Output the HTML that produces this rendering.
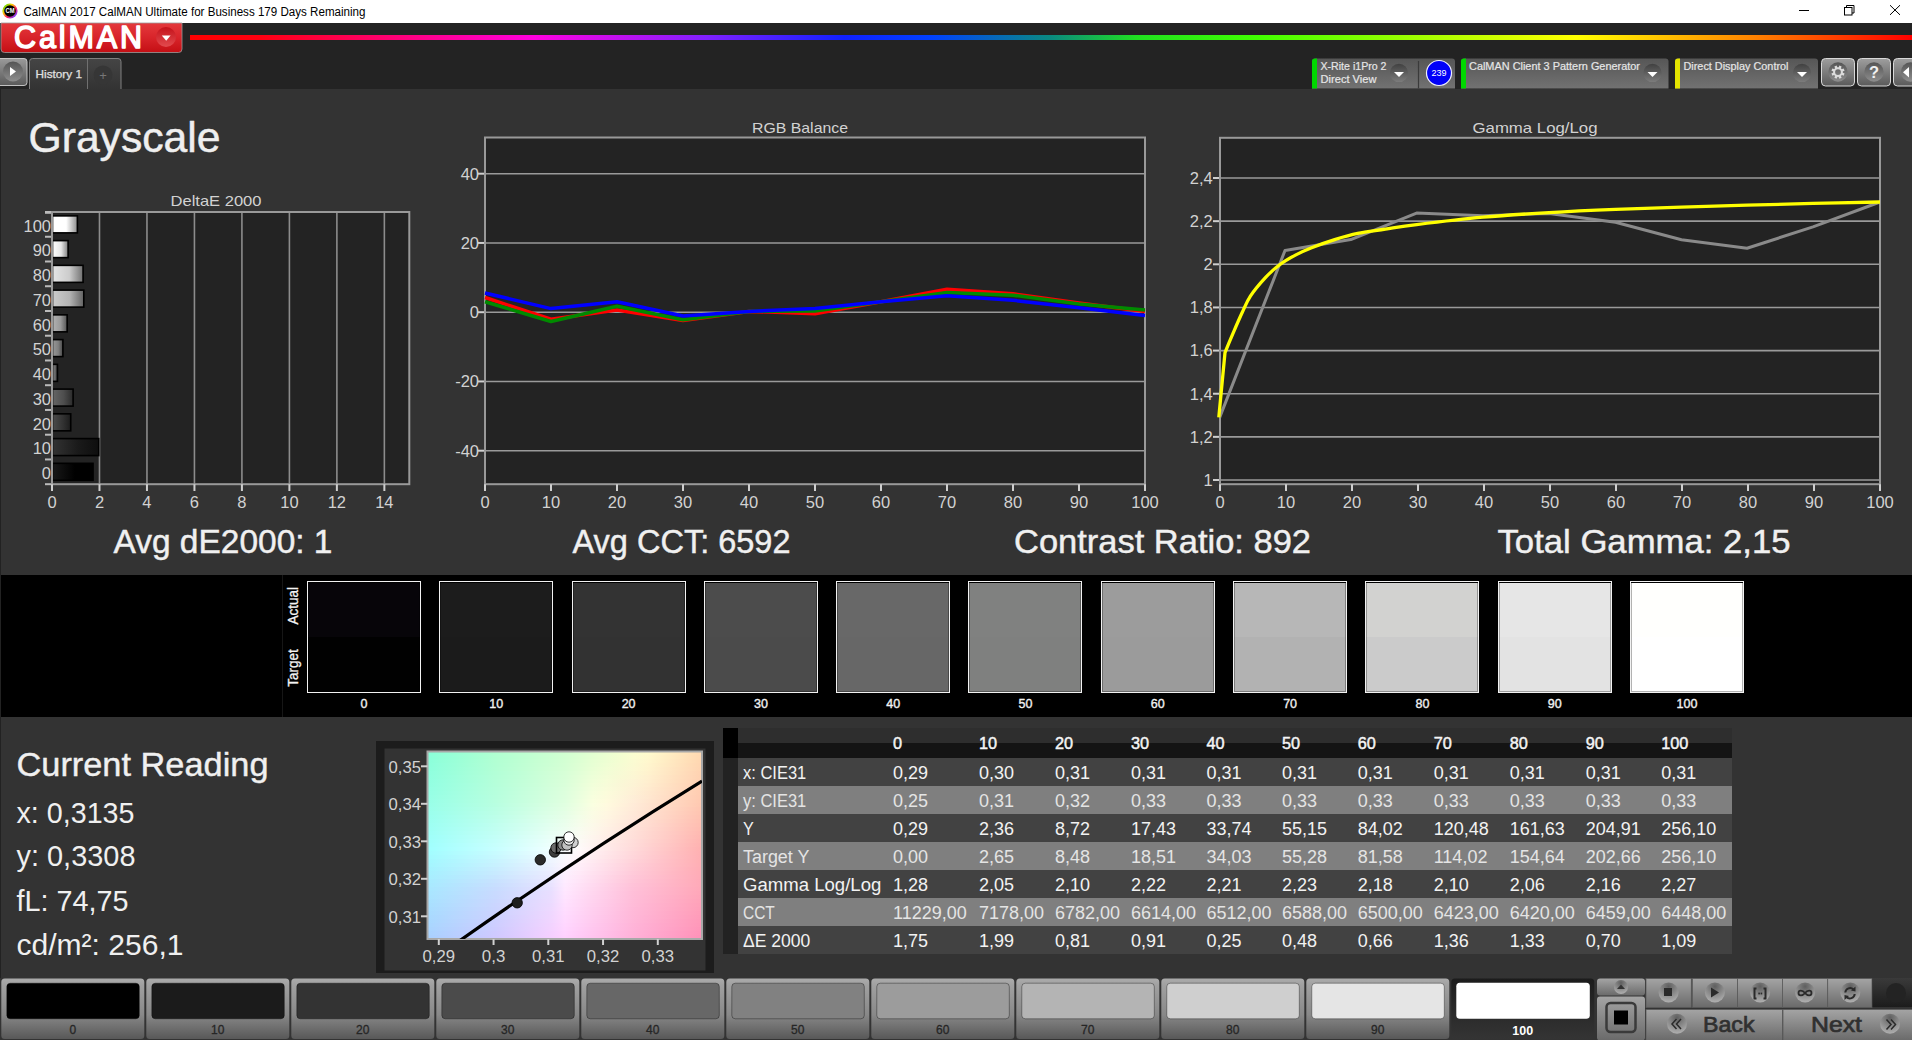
<!DOCTYPE html>
<html><head><meta charset="utf-8"><title>CalMAN Grayscale</title>
<style>
html,body{margin:0;padding:0;background:#333;overflow:hidden;}
svg{display:block;font-family:"Liberation Sans",sans-serif;}
</style></head><body>
<svg width="1912" height="1040" viewBox="0 0 1912 1040">
<defs>
<linearGradient id="ring" x1="0" y1="0" x2="1" y2="1">
<stop offset="0" stop-color="#00e000"/><stop offset="0.35" stop-color="#ffd000"/>
<stop offset="0.6" stop-color="#ff2060"/><stop offset="0.85" stop-color="#8040ff"/><stop offset="1" stop-color="#00d0ff"/></linearGradient>
<linearGradient id="redg" x1="0" y1="0" x2="0" y2="1">
<stop offset="0" stop-color="#e4393c"/><stop offset="0.5" stop-color="#d8242a"/><stop offset="1" stop-color="#c40f14"/></linearGradient>
<linearGradient id="reddd" x1="0" y1="0" x2="0" y2="1">
<stop offset="0" stop-color="#c4121a"/><stop offset="1" stop-color="#e24a4e"/></linearGradient>
<linearGradient id="rainbow" x1="190" y1="0" x2="1912" y2="0" gradientUnits="userSpaceOnUse">
<stop offset="0" stop-color="#ff0000"/>
<stop offset="0.04" stop-color="#ff0010"/>
<stop offset="0.20" stop-color="#ff00e0"/>
<stop offset="0.30" stop-color="#8020ff"/>
<stop offset="0.38" stop-color="#1020ff"/>
<stop offset="0.43" stop-color="#0040ff"/>
<stop offset="0.50" stop-color="#0a8a80"/>
<stop offset="0.55" stop-color="#20e020"/>
<stop offset="0.62" stop-color="#40ff00"/>
<stop offset="0.805" stop-color="#ffff00"/>
<stop offset="0.91" stop-color="#ff8000"/>
<stop offset="1" stop-color="#ff0000"/></linearGradient>
<linearGradient id="playg" x1="0" y1="0" x2="0" y2="1">
<stop offset="0" stop-color="#9a9a9a"/><stop offset="1" stop-color="#5a5a5a"/></linearGradient>
<radialGradient id="circd" cx="0.5" cy="0.3" r="0.75">
<stop offset="0" stop-color="#4a4a4a"/><stop offset="1" stop-color="#8a8a8a"/></radialGradient>
<linearGradient id="tabg" x1="0" y1="0" x2="0" y2="1">
<stop offset="0" stop-color="#454545"/><stop offset="1" stop-color="#333333"/></linearGradient>
<linearGradient id="panelg" x1="0" y1="0" x2="0" y2="1">
<stop offset="0" stop-color="#565656"/><stop offset="1" stop-color="#727272"/></linearGradient>
<linearGradient id="ddg" x1="0" y1="0" x2="0" y2="1">
<stop offset="0" stop-color="#404040"/><stop offset="1" stop-color="#7c7c7c"/></linearGradient>
<linearGradient id="btnc" x1="0" y1="0" x2="0" y2="1"><stop offset="0" stop-color="#555"/><stop offset="1" stop-color="#8e8e8e"/></linearGradient>
<linearGradient id="btng" x1="0" y1="0" x2="0" y2="1">
<stop offset="0" stop-color="#9e9e9e"/><stop offset="1" stop-color="#5a5a5a"/></linearGradient>
<linearGradient id="bar0" x1="0" y1="0" x2="1" y2="0">
<stop offset="0" stop-color="rgb(25,25,25)"/><stop offset="0.55" stop-color="rgb(0,0,0)"/><stop offset="1" stop-color="rgb(0,0,0)"/></linearGradient>
<linearGradient id="bar1" x1="0" y1="0" x2="1" y2="0">
<stop offset="0" stop-color="rgb(51,51,51)"/><stop offset="0.55" stop-color="rgb(26,26,26)"/><stop offset="1" stop-color="rgb(14,14,14)"/></linearGradient>
<linearGradient id="bar2" x1="0" y1="0" x2="1" y2="0">
<stop offset="0" stop-color="rgb(76,76,76)"/><stop offset="0.55" stop-color="rgb(51,51,51)"/><stop offset="1" stop-color="rgb(28,28,28)"/></linearGradient>
<linearGradient id="bar3" x1="0" y1="0" x2="1" y2="0">
<stop offset="0" stop-color="rgb(102,102,102)"/><stop offset="0.55" stop-color="rgb(77,77,77)"/><stop offset="1" stop-color="rgb(42,42,42)"/></linearGradient>
<linearGradient id="bar4" x1="0" y1="0" x2="1" y2="0">
<stop offset="0" stop-color="rgb(127,127,127)"/><stop offset="0.55" stop-color="rgb(102,102,102)"/><stop offset="1" stop-color="rgb(56,56,56)"/></linearGradient>
<linearGradient id="bar5" x1="0" y1="0" x2="1" y2="0">
<stop offset="0" stop-color="rgb(153,153,153)"/><stop offset="0.55" stop-color="rgb(128,128,128)"/><stop offset="1" stop-color="rgb(70,70,70)"/></linearGradient>
<linearGradient id="bar6" x1="0" y1="0" x2="1" y2="0">
<stop offset="0" stop-color="rgb(178,178,178)"/><stop offset="0.55" stop-color="rgb(153,153,153)"/><stop offset="1" stop-color="rgb(84,84,84)"/></linearGradient>
<linearGradient id="bar7" x1="0" y1="0" x2="1" y2="0">
<stop offset="0" stop-color="rgb(204,204,204)"/><stop offset="0.55" stop-color="rgb(179,179,179)"/><stop offset="1" stop-color="rgb(98,98,98)"/></linearGradient>
<linearGradient id="bar8" x1="0" y1="0" x2="1" y2="0">
<stop offset="0" stop-color="rgb(229,229,229)"/><stop offset="0.55" stop-color="rgb(204,204,204)"/><stop offset="1" stop-color="rgb(112,112,112)"/></linearGradient>
<linearGradient id="bar9" x1="0" y1="0" x2="1" y2="0">
<stop offset="0" stop-color="rgb(255,255,255)"/><stop offset="0.55" stop-color="rgb(230,230,230)"/><stop offset="1" stop-color="rgb(126,126,126)"/></linearGradient>
<linearGradient id="bar10" x1="0" y1="0" x2="1" y2="0">
<stop offset="0" stop-color="rgb(255,255,255)"/><stop offset="0.55" stop-color="rgb(255,255,255)"/><stop offset="1" stop-color="rgb(140,140,140)"/></linearGradient>
<linearGradient id="cs0"><stop offset="0.00" stop-color="#89ffd9"/><stop offset="0.05" stop-color="#91ffd7"/><stop offset="0.10" stop-color="#98ffd5"/><stop offset="0.15" stop-color="#a0ffd4"/><stop offset="0.20" stop-color="#a8ffd2"/><stop offset="0.25" stop-color="#b0ffd1"/><stop offset="0.30" stop-color="#b7ffd1"/><stop offset="0.35" stop-color="#bdffd1"/><stop offset="0.40" stop-color="#c4ffd1"/><stop offset="0.45" stop-color="#caffd1"/><stop offset="0.50" stop-color="#d1ffd1"/><stop offset="0.55" stop-color="#d9ffd1"/><stop offset="0.60" stop-color="#e2ffd1"/><stop offset="0.65" stop-color="#eaffd1"/><stop offset="0.70" stop-color="#f2ffd0"/><stop offset="0.75" stop-color="#fafed0"/><stop offset="0.80" stop-color="#fffbcd"/><stop offset="0.85" stop-color="#fff2c6"/><stop offset="0.90" stop-color="#ffe9bf"/><stop offset="0.95" stop-color="#ffe0b7"/><stop offset="1.00" stop-color="#ffd7b0"/></linearGradient>
<linearGradient id="cs1"><stop offset="0.00" stop-color="#8affda"/><stop offset="0.05" stop-color="#92ffd8"/><stop offset="0.10" stop-color="#99ffd7"/><stop offset="0.15" stop-color="#a1ffd5"/><stop offset="0.20" stop-color="#a9ffd3"/><stop offset="0.25" stop-color="#b1ffd2"/><stop offset="0.30" stop-color="#b7ffd2"/><stop offset="0.35" stop-color="#beffd2"/><stop offset="0.40" stop-color="#c5ffd2"/><stop offset="0.45" stop-color="#cbffd2"/><stop offset="0.50" stop-color="#d2ffd2"/><stop offset="0.55" stop-color="#dbffd2"/><stop offset="0.60" stop-color="#e4ffd2"/><stop offset="0.65" stop-color="#ecffd2"/><stop offset="0.70" stop-color="#f3fed1"/><stop offset="0.75" stop-color="#fbfdd1"/><stop offset="0.80" stop-color="#fff9cd"/><stop offset="0.85" stop-color="#fff0c6"/><stop offset="0.90" stop-color="#ffe8bf"/><stop offset="0.95" stop-color="#ffdfb7"/><stop offset="1.00" stop-color="#ffd6b0"/></linearGradient>
<linearGradient id="cs2"><stop offset="0.00" stop-color="#8bffdb"/><stop offset="0.05" stop-color="#93ffd9"/><stop offset="0.10" stop-color="#9affd8"/><stop offset="0.15" stop-color="#a2ffd6"/><stop offset="0.20" stop-color="#aaffd5"/><stop offset="0.25" stop-color="#b2ffd3"/><stop offset="0.30" stop-color="#b8ffd3"/><stop offset="0.35" stop-color="#bfffd3"/><stop offset="0.40" stop-color="#c6ffd3"/><stop offset="0.45" stop-color="#ccffd3"/><stop offset="0.50" stop-color="#d3ffd3"/><stop offset="0.55" stop-color="#dcffd3"/><stop offset="0.60" stop-color="#e6ffd3"/><stop offset="0.65" stop-color="#edfed3"/><stop offset="0.70" stop-color="#f4fdd2"/><stop offset="0.75" stop-color="#fbfbd2"/><stop offset="0.80" stop-color="#fff7ce"/><stop offset="0.85" stop-color="#ffefc6"/><stop offset="0.90" stop-color="#ffe6bf"/><stop offset="0.95" stop-color="#ffdeb7"/><stop offset="1.00" stop-color="#ffd5b0"/></linearGradient>
<linearGradient id="cs3"><stop offset="0.00" stop-color="#8cffdc"/><stop offset="0.05" stop-color="#94ffdb"/><stop offset="0.10" stop-color="#9bffd9"/><stop offset="0.15" stop-color="#a3ffd7"/><stop offset="0.20" stop-color="#abffd6"/><stop offset="0.25" stop-color="#b2ffd4"/><stop offset="0.30" stop-color="#b9ffd4"/><stop offset="0.35" stop-color="#c0ffd4"/><stop offset="0.40" stop-color="#c7ffd4"/><stop offset="0.45" stop-color="#cdffd4"/><stop offset="0.50" stop-color="#d4ffd4"/><stop offset="0.55" stop-color="#deffd4"/><stop offset="0.60" stop-color="#e7ffd4"/><stop offset="0.65" stop-color="#effed4"/><stop offset="0.70" stop-color="#f5fcd3"/><stop offset="0.75" stop-color="#fbfad2"/><stop offset="0.80" stop-color="#fff5ce"/><stop offset="0.85" stop-color="#ffedc6"/><stop offset="0.90" stop-color="#ffe5bf"/><stop offset="0.95" stop-color="#ffdcb7"/><stop offset="1.00" stop-color="#ffd4b0"/></linearGradient>
<linearGradient id="cs4"><stop offset="0.00" stop-color="#8dffdd"/><stop offset="0.05" stop-color="#95ffdc"/><stop offset="0.10" stop-color="#9cffda"/><stop offset="0.15" stop-color="#a4ffd9"/><stop offset="0.20" stop-color="#abffd7"/><stop offset="0.25" stop-color="#b3ffd5"/><stop offset="0.30" stop-color="#baffd5"/><stop offset="0.35" stop-color="#c1ffd5"/><stop offset="0.40" stop-color="#c8ffd5"/><stop offset="0.45" stop-color="#cfffd5"/><stop offset="0.50" stop-color="#d5ffd5"/><stop offset="0.55" stop-color="#dfffd5"/><stop offset="0.60" stop-color="#e9ffd5"/><stop offset="0.65" stop-color="#f1fed5"/><stop offset="0.70" stop-color="#f6fbd4"/><stop offset="0.75" stop-color="#fcf9d3"/><stop offset="0.80" stop-color="#fff4ce"/><stop offset="0.85" stop-color="#ffebc7"/><stop offset="0.90" stop-color="#ffe3bf"/><stop offset="0.95" stop-color="#ffdbb8"/><stop offset="1.00" stop-color="#ffd3b0"/></linearGradient>
<linearGradient id="cs5"><stop offset="0.00" stop-color="#8fffdf"/><stop offset="0.05" stop-color="#96ffdd"/><stop offset="0.10" stop-color="#9dffdb"/><stop offset="0.15" stop-color="#a5ffda"/><stop offset="0.20" stop-color="#acffd8"/><stop offset="0.25" stop-color="#b3ffd7"/><stop offset="0.30" stop-color="#baffd7"/><stop offset="0.35" stop-color="#c1ffd7"/><stop offset="0.40" stop-color="#c9ffd7"/><stop offset="0.45" stop-color="#d0ffd7"/><stop offset="0.50" stop-color="#d7ffd7"/><stop offset="0.55" stop-color="#e1ffd7"/><stop offset="0.60" stop-color="#ebffd7"/><stop offset="0.65" stop-color="#f2fdd6"/><stop offset="0.70" stop-color="#f7fad5"/><stop offset="0.75" stop-color="#fcf7d3"/><stop offset="0.80" stop-color="#fff2ce"/><stop offset="0.85" stop-color="#ffeac7"/><stop offset="0.90" stop-color="#ffe2bf"/><stop offset="0.95" stop-color="#ffd9b8"/><stop offset="1.00" stop-color="#ffd1b0"/></linearGradient>
<linearGradient id="cs6"><stop offset="0.00" stop-color="#90ffe0"/><stop offset="0.05" stop-color="#97ffde"/><stop offset="0.10" stop-color="#9effdd"/><stop offset="0.15" stop-color="#a6ffdb"/><stop offset="0.20" stop-color="#adffda"/><stop offset="0.25" stop-color="#b4ffd8"/><stop offset="0.30" stop-color="#bbffd8"/><stop offset="0.35" stop-color="#c2ffd8"/><stop offset="0.40" stop-color="#caffd8"/><stop offset="0.45" stop-color="#d1ffd8"/><stop offset="0.50" stop-color="#d8ffd8"/><stop offset="0.55" stop-color="#e3ffd8"/><stop offset="0.60" stop-color="#edffd8"/><stop offset="0.65" stop-color="#f4fdd7"/><stop offset="0.70" stop-color="#f8f9d5"/><stop offset="0.75" stop-color="#fcf6d4"/><stop offset="0.80" stop-color="#fff0cf"/><stop offset="0.85" stop-color="#ffe8c7"/><stop offset="0.90" stop-color="#ffe0bf"/><stop offset="0.95" stop-color="#ffd8b8"/><stop offset="1.00" stop-color="#ffd0b0"/></linearGradient>
<linearGradient id="cs7"><stop offset="0.00" stop-color="#91ffe1"/><stop offset="0.05" stop-color="#98ffe0"/><stop offset="0.10" stop-color="#9fffde"/><stop offset="0.15" stop-color="#a6ffdc"/><stop offset="0.20" stop-color="#adffdb"/><stop offset="0.25" stop-color="#b5ffd9"/><stop offset="0.30" stop-color="#bcffd9"/><stop offset="0.35" stop-color="#c3ffd9"/><stop offset="0.40" stop-color="#caffd9"/><stop offset="0.45" stop-color="#d2ffd9"/><stop offset="0.50" stop-color="#d9ffd9"/><stop offset="0.55" stop-color="#e4ffd9"/><stop offset="0.60" stop-color="#efffd9"/><stop offset="0.65" stop-color="#f6fdd8"/><stop offset="0.70" stop-color="#f9f8d6"/><stop offset="0.75" stop-color="#fdf4d5"/><stop offset="0.80" stop-color="#ffefcf"/><stop offset="0.85" stop-color="#ffe7c7"/><stop offset="0.90" stop-color="#ffdfbf"/><stop offset="0.95" stop-color="#ffd7b8"/><stop offset="1.00" stop-color="#ffcfb0"/></linearGradient>
<linearGradient id="cs8"><stop offset="0.00" stop-color="#92ffe2"/><stop offset="0.05" stop-color="#99ffe1"/><stop offset="0.10" stop-color="#a0ffdf"/><stop offset="0.15" stop-color="#a7ffde"/><stop offset="0.20" stop-color="#aeffdc"/><stop offset="0.25" stop-color="#b5ffda"/><stop offset="0.30" stop-color="#bdffda"/><stop offset="0.35" stop-color="#c4ffda"/><stop offset="0.40" stop-color="#cbffda"/><stop offset="0.45" stop-color="#d3ffda"/><stop offset="0.50" stop-color="#daffda"/><stop offset="0.55" stop-color="#e6ffda"/><stop offset="0.60" stop-color="#f1ffda"/><stop offset="0.65" stop-color="#f7fcd9"/><stop offset="0.70" stop-color="#faf7d7"/><stop offset="0.75" stop-color="#fdf3d5"/><stop offset="0.80" stop-color="#ffedcf"/><stop offset="0.85" stop-color="#ffe5c7"/><stop offset="0.90" stop-color="#ffddbf"/><stop offset="0.95" stop-color="#ffd5b8"/><stop offset="1.00" stop-color="#ffceb0"/></linearGradient>
<linearGradient id="cs9"><stop offset="0.00" stop-color="#94ffe4"/><stop offset="0.05" stop-color="#9affe2"/><stop offset="0.10" stop-color="#a1ffe0"/><stop offset="0.15" stop-color="#a8ffdf"/><stop offset="0.20" stop-color="#afffdd"/><stop offset="0.25" stop-color="#b6ffdc"/><stop offset="0.30" stop-color="#bdffdc"/><stop offset="0.35" stop-color="#c5ffdc"/><stop offset="0.40" stop-color="#ccffdc"/><stop offset="0.45" stop-color="#d4ffdc"/><stop offset="0.50" stop-color="#dcffdc"/><stop offset="0.55" stop-color="#e7ffdc"/><stop offset="0.60" stop-color="#f3ffdc"/><stop offset="0.65" stop-color="#f9fcda"/><stop offset="0.70" stop-color="#fbf7d8"/><stop offset="0.75" stop-color="#fef1d6"/><stop offset="0.80" stop-color="#ffebcf"/><stop offset="0.85" stop-color="#ffe3c7"/><stop offset="0.90" stop-color="#ffdcc0"/><stop offset="0.95" stop-color="#ffd4b8"/><stop offset="1.00" stop-color="#ffccb0"/></linearGradient>
<linearGradient id="cs10"><stop offset="0.00" stop-color="#95ffe5"/><stop offset="0.05" stop-color="#9bffe3"/><stop offset="0.10" stop-color="#a2ffe2"/><stop offset="0.15" stop-color="#a9ffe0"/><stop offset="0.20" stop-color="#b0ffde"/><stop offset="0.25" stop-color="#b6ffdd"/><stop offset="0.30" stop-color="#beffdd"/><stop offset="0.35" stop-color="#c6ffdd"/><stop offset="0.40" stop-color="#cdffdd"/><stop offset="0.45" stop-color="#d5ffdd"/><stop offset="0.50" stop-color="#ddffdd"/><stop offset="0.55" stop-color="#e9ffdd"/><stop offset="0.60" stop-color="#f5ffdd"/><stop offset="0.65" stop-color="#fbfcdb"/><stop offset="0.70" stop-color="#fcf6d9"/><stop offset="0.75" stop-color="#fef0d6"/><stop offset="0.80" stop-color="#ffe9cf"/><stop offset="0.85" stop-color="#ffe2c8"/><stop offset="0.90" stop-color="#ffdac0"/><stop offset="0.95" stop-color="#ffd3b8"/><stop offset="1.00" stop-color="#ffcbb0"/></linearGradient>
<linearGradient id="cs11"><stop offset="0.00" stop-color="#96ffe6"/><stop offset="0.05" stop-color="#9dffe4"/><stop offset="0.10" stop-color="#a3ffe3"/><stop offset="0.15" stop-color="#aaffe1"/><stop offset="0.20" stop-color="#b0ffe0"/><stop offset="0.25" stop-color="#b7ffde"/><stop offset="0.30" stop-color="#bfffde"/><stop offset="0.35" stop-color="#c7ffde"/><stop offset="0.40" stop-color="#ceffde"/><stop offset="0.45" stop-color="#d6ffde"/><stop offset="0.50" stop-color="#deffde"/><stop offset="0.55" stop-color="#eaffde"/><stop offset="0.60" stop-color="#f7ffde"/><stop offset="0.65" stop-color="#fcfbdc"/><stop offset="0.70" stop-color="#fdf5da"/><stop offset="0.75" stop-color="#feeed7"/><stop offset="0.80" stop-color="#ffe8d0"/><stop offset="0.85" stop-color="#ffe0c8"/><stop offset="0.90" stop-color="#ffd9c0"/><stop offset="0.95" stop-color="#ffd1b8"/><stop offset="1.00" stop-color="#ffcab0"/></linearGradient>
<linearGradient id="cs12"><stop offset="0.00" stop-color="#97ffe7"/><stop offset="0.05" stop-color="#9effe6"/><stop offset="0.10" stop-color="#a4ffe4"/><stop offset="0.15" stop-color="#abffe2"/><stop offset="0.20" stop-color="#b1ffe1"/><stop offset="0.25" stop-color="#b8ffdf"/><stop offset="0.30" stop-color="#c0ffdf"/><stop offset="0.35" stop-color="#c7ffdf"/><stop offset="0.40" stop-color="#cfffdf"/><stop offset="0.45" stop-color="#d7ffdf"/><stop offset="0.50" stop-color="#dfffdf"/><stop offset="0.55" stop-color="#ecffdf"/><stop offset="0.60" stop-color="#f9ffdf"/><stop offset="0.65" stop-color="#fefbdd"/><stop offset="0.70" stop-color="#fef4db"/><stop offset="0.75" stop-color="#ffedd8"/><stop offset="0.80" stop-color="#ffe6d0"/><stop offset="0.85" stop-color="#ffdfc8"/><stop offset="0.90" stop-color="#ffd7c0"/><stop offset="0.95" stop-color="#ffd0b8"/><stop offset="1.00" stop-color="#ffc9b0"/></linearGradient>
<linearGradient id="cs13"><stop offset="0.00" stop-color="#98ffe9"/><stop offset="0.05" stop-color="#9fffe7"/><stop offset="0.10" stop-color="#a5ffe6"/><stop offset="0.15" stop-color="#acffe4"/><stop offset="0.20" stop-color="#b2ffe2"/><stop offset="0.25" stop-color="#b8ffe1"/><stop offset="0.30" stop-color="#c1ffe1"/><stop offset="0.35" stop-color="#c9ffe1"/><stop offset="0.40" stop-color="#d1ffe1"/><stop offset="0.45" stop-color="#d9ffe1"/><stop offset="0.50" stop-color="#e1ffe1"/><stop offset="0.55" stop-color="#edffe1"/><stop offset="0.60" stop-color="#faffe1"/><stop offset="0.65" stop-color="#fffadf"/><stop offset="0.70" stop-color="#fff3db"/><stop offset="0.75" stop-color="#ffebd8"/><stop offset="0.80" stop-color="#ffe4d0"/><stop offset="0.85" stop-color="#ffddc8"/><stop offset="0.90" stop-color="#ffd6c0"/><stop offset="0.95" stop-color="#ffcfb8"/><stop offset="1.00" stop-color="#ffc7b0"/></linearGradient>
<linearGradient id="cs14"><stop offset="0.00" stop-color="#99ffeb"/><stop offset="0.05" stop-color="#a0ffe9"/><stop offset="0.10" stop-color="#a6ffe8"/><stop offset="0.15" stop-color="#adffe7"/><stop offset="0.20" stop-color="#b3ffe5"/><stop offset="0.25" stop-color="#baffe4"/><stop offset="0.30" stop-color="#c2ffe4"/><stop offset="0.35" stop-color="#caffe4"/><stop offset="0.40" stop-color="#d3ffe4"/><stop offset="0.45" stop-color="#dbffe4"/><stop offset="0.50" stop-color="#e3ffe3"/><stop offset="0.55" stop-color="#effee3"/><stop offset="0.60" stop-color="#fafde2"/><stop offset="0.65" stop-color="#fff9e0"/><stop offset="0.70" stop-color="#fff1dc"/><stop offset="0.75" stop-color="#ffead8"/><stop offset="0.80" stop-color="#ffe3d0"/><stop offset="0.85" stop-color="#ffdbc8"/><stop offset="0.90" stop-color="#ffd4c0"/><stop offset="0.95" stop-color="#ffccb8"/><stop offset="1.00" stop-color="#ffc5b0"/></linearGradient>
<linearGradient id="cs15"><stop offset="0.00" stop-color="#9affed"/><stop offset="0.05" stop-color="#a0ffec"/><stop offset="0.10" stop-color="#a7ffea"/><stop offset="0.15" stop-color="#aeffe9"/><stop offset="0.20" stop-color="#b5ffe8"/><stop offset="0.25" stop-color="#bbffe6"/><stop offset="0.30" stop-color="#c4ffe6"/><stop offset="0.35" stop-color="#ccffe6"/><stop offset="0.40" stop-color="#d5ffe6"/><stop offset="0.45" stop-color="#ddffe6"/><stop offset="0.50" stop-color="#e5fee6"/><stop offset="0.55" stop-color="#f1fee5"/><stop offset="0.60" stop-color="#fbfce4"/><stop offset="0.65" stop-color="#fff7e1"/><stop offset="0.70" stop-color="#fff0dd"/><stop offset="0.75" stop-color="#ffe8d8"/><stop offset="0.80" stop-color="#ffe1d0"/><stop offset="0.85" stop-color="#ffd9c8"/><stop offset="0.90" stop-color="#ffd2c0"/><stop offset="0.95" stop-color="#ffcab8"/><stop offset="1.00" stop-color="#ffc3b0"/></linearGradient>
<linearGradient id="cs16"><stop offset="0.00" stop-color="#9affef"/><stop offset="0.05" stop-color="#a1ffee"/><stop offset="0.10" stop-color="#a8ffed"/><stop offset="0.15" stop-color="#afffeb"/><stop offset="0.20" stop-color="#b6ffea"/><stop offset="0.25" stop-color="#bdffe9"/><stop offset="0.30" stop-color="#c5ffe9"/><stop offset="0.35" stop-color="#ceffe9"/><stop offset="0.40" stop-color="#d7ffe9"/><stop offset="0.45" stop-color="#dfffe9"/><stop offset="0.50" stop-color="#e7fee8"/><stop offset="0.55" stop-color="#f2fee8"/><stop offset="0.60" stop-color="#fbfbe5"/><stop offset="0.65" stop-color="#fff6e2"/><stop offset="0.70" stop-color="#ffeedd"/><stop offset="0.75" stop-color="#ffe7d9"/><stop offset="0.80" stop-color="#ffdfd0"/><stop offset="0.85" stop-color="#ffd8c8"/><stop offset="0.90" stop-color="#ffd0c0"/><stop offset="0.95" stop-color="#ffc8b8"/><stop offset="1.00" stop-color="#ffc1b0"/></linearGradient>
<linearGradient id="cs17"><stop offset="0.00" stop-color="#9bfff1"/><stop offset="0.05" stop-color="#a2fff0"/><stop offset="0.10" stop-color="#a9ffef"/><stop offset="0.15" stop-color="#b0ffee"/><stop offset="0.20" stop-color="#b7ffed"/><stop offset="0.25" stop-color="#beffec"/><stop offset="0.30" stop-color="#c7ffec"/><stop offset="0.35" stop-color="#d0ffec"/><stop offset="0.40" stop-color="#d8ffec"/><stop offset="0.45" stop-color="#e1ffec"/><stop offset="0.50" stop-color="#e9feeb"/><stop offset="0.55" stop-color="#f4fdea"/><stop offset="0.60" stop-color="#fcfae7"/><stop offset="0.65" stop-color="#fff4e3"/><stop offset="0.70" stop-color="#ffedde"/><stop offset="0.75" stop-color="#ffe5d9"/><stop offset="0.80" stop-color="#ffddd1"/><stop offset="0.85" stop-color="#ffd6c8"/><stop offset="0.90" stop-color="#ffcec0"/><stop offset="0.95" stop-color="#ffc6b8"/><stop offset="1.00" stop-color="#ffbfb0"/></linearGradient>
<linearGradient id="cs18"><stop offset="0.00" stop-color="#9cfff3"/><stop offset="0.05" stop-color="#a3fff2"/><stop offset="0.10" stop-color="#aafff1"/><stop offset="0.15" stop-color="#b1fff0"/><stop offset="0.20" stop-color="#b8fff0"/><stop offset="0.25" stop-color="#c0ffef"/><stop offset="0.30" stop-color="#c9ffef"/><stop offset="0.35" stop-color="#d1ffef"/><stop offset="0.40" stop-color="#daffef"/><stop offset="0.45" stop-color="#e3ffef"/><stop offset="0.50" stop-color="#ebfeed"/><stop offset="0.55" stop-color="#f5fdec"/><stop offset="0.60" stop-color="#fcf9e9"/><stop offset="0.65" stop-color="#fff3e4"/><stop offset="0.70" stop-color="#ffebde"/><stop offset="0.75" stop-color="#ffe3d9"/><stop offset="0.80" stop-color="#ffdcd1"/><stop offset="0.85" stop-color="#ffd4c9"/><stop offset="0.90" stop-color="#ffccc0"/><stop offset="0.95" stop-color="#ffc4b8"/><stop offset="1.00" stop-color="#ffbdb0"/></linearGradient>
<linearGradient id="cs19"><stop offset="0.00" stop-color="#9cfff5"/><stop offset="0.05" stop-color="#a4fff4"/><stop offset="0.10" stop-color="#abfff4"/><stop offset="0.15" stop-color="#b2fff3"/><stop offset="0.20" stop-color="#bafff2"/><stop offset="0.25" stop-color="#c1fff1"/><stop offset="0.30" stop-color="#cafff1"/><stop offset="0.35" stop-color="#d3fff1"/><stop offset="0.40" stop-color="#dcfff1"/><stop offset="0.45" stop-color="#e5fff1"/><stop offset="0.50" stop-color="#edfef0"/><stop offset="0.55" stop-color="#f7fcef"/><stop offset="0.60" stop-color="#fdf8ea"/><stop offset="0.65" stop-color="#fff1e5"/><stop offset="0.70" stop-color="#ffeadf"/><stop offset="0.75" stop-color="#ffe2d9"/><stop offset="0.80" stop-color="#ffdad1"/><stop offset="0.85" stop-color="#ffd2c9"/><stop offset="0.90" stop-color="#ffcac0"/><stop offset="0.95" stop-color="#ffc2b8"/><stop offset="1.00" stop-color="#ffbbb0"/></linearGradient>
<linearGradient id="cs20"><stop offset="0.00" stop-color="#9dfff7"/><stop offset="0.05" stop-color="#a5fff6"/><stop offset="0.10" stop-color="#acfff6"/><stop offset="0.15" stop-color="#b4fff5"/><stop offset="0.20" stop-color="#bbfff5"/><stop offset="0.25" stop-color="#c2fff4"/><stop offset="0.30" stop-color="#ccfff4"/><stop offset="0.35" stop-color="#d5fff4"/><stop offset="0.40" stop-color="#defff4"/><stop offset="0.45" stop-color="#e8fff4"/><stop offset="0.50" stop-color="#effdf3"/><stop offset="0.55" stop-color="#f9fcf1"/><stop offset="0.60" stop-color="#fdf7ec"/><stop offset="0.65" stop-color="#fff0e6"/><stop offset="0.70" stop-color="#ffe8e0"/><stop offset="0.75" stop-color="#ffe0d9"/><stop offset="0.80" stop-color="#ffd8d1"/><stop offset="0.85" stop-color="#ffd0c9"/><stop offset="0.90" stop-color="#ffc8c1"/><stop offset="0.95" stop-color="#ffc0b8"/><stop offset="1.00" stop-color="#ffb8b0"/></linearGradient>
<linearGradient id="cs21"><stop offset="0.00" stop-color="#9efff9"/><stop offset="0.05" stop-color="#a5fff9"/><stop offset="0.10" stop-color="#adfff8"/><stop offset="0.15" stop-color="#b5fff8"/><stop offset="0.20" stop-color="#bcfff7"/><stop offset="0.25" stop-color="#c4fff7"/><stop offset="0.30" stop-color="#cdfff7"/><stop offset="0.35" stop-color="#d7fff7"/><stop offset="0.40" stop-color="#e0fff7"/><stop offset="0.45" stop-color="#eafff7"/><stop offset="0.50" stop-color="#f1fdf5"/><stop offset="0.55" stop-color="#fafbf3"/><stop offset="0.60" stop-color="#fef5ed"/><stop offset="0.65" stop-color="#ffeee7"/><stop offset="0.70" stop-color="#ffe7e0"/><stop offset="0.75" stop-color="#ffdfd9"/><stop offset="0.80" stop-color="#ffd7d1"/><stop offset="0.85" stop-color="#ffcfc9"/><stop offset="0.90" stop-color="#ffc6c1"/><stop offset="0.95" stop-color="#ffbeb8"/><stop offset="1.00" stop-color="#ffb6b0"/></linearGradient>
<linearGradient id="cs22"><stop offset="0.00" stop-color="#9ffffb"/><stop offset="0.05" stop-color="#a6fffb"/><stop offset="0.10" stop-color="#aefffa"/><stop offset="0.15" stop-color="#b6fffa"/><stop offset="0.20" stop-color="#befffa"/><stop offset="0.25" stop-color="#c5fffa"/><stop offset="0.30" stop-color="#cffffa"/><stop offset="0.35" stop-color="#d9fffa"/><stop offset="0.40" stop-color="#e2fffa"/><stop offset="0.45" stop-color="#ecfffa"/><stop offset="0.50" stop-color="#f3fdf8"/><stop offset="0.55" stop-color="#fcfbf6"/><stop offset="0.60" stop-color="#fef4ef"/><stop offset="0.65" stop-color="#ffede8"/><stop offset="0.70" stop-color="#ffe5e1"/><stop offset="0.75" stop-color="#ffddda"/><stop offset="0.80" stop-color="#ffd5d1"/><stop offset="0.85" stop-color="#ffcdc9"/><stop offset="0.90" stop-color="#ffc5c1"/><stop offset="0.95" stop-color="#ffbcb8"/><stop offset="1.00" stop-color="#ffb4b0"/></linearGradient>
<linearGradient id="cs23"><stop offset="0.00" stop-color="#9ffffd"/><stop offset="0.05" stop-color="#a7fffd"/><stop offset="0.10" stop-color="#affffd"/><stop offset="0.15" stop-color="#b7fffd"/><stop offset="0.20" stop-color="#bffffd"/><stop offset="0.25" stop-color="#c7fffc"/><stop offset="0.30" stop-color="#d0fffc"/><stop offset="0.35" stop-color="#dafffc"/><stop offset="0.40" stop-color="#e4fffc"/><stop offset="0.45" stop-color="#eefffc"/><stop offset="0.50" stop-color="#f6fdfa"/><stop offset="0.55" stop-color="#fdfaf8"/><stop offset="0.60" stop-color="#fff3f0"/><stop offset="0.65" stop-color="#ffebe9"/><stop offset="0.70" stop-color="#ffe3e1"/><stop offset="0.75" stop-color="#ffdcda"/><stop offset="0.80" stop-color="#ffd3d1"/><stop offset="0.85" stop-color="#ffcbc9"/><stop offset="0.90" stop-color="#ffc3c1"/><stop offset="0.95" stop-color="#ffbab8"/><stop offset="1.00" stop-color="#ffb2b0"/></linearGradient>
<linearGradient id="cs24"><stop offset="0.00" stop-color="#a0ffff"/><stop offset="0.05" stop-color="#a8ffff"/><stop offset="0.10" stop-color="#b0ffff"/><stop offset="0.15" stop-color="#b8ffff"/><stop offset="0.20" stop-color="#c0ffff"/><stop offset="0.25" stop-color="#c8ffff"/><stop offset="0.30" stop-color="#d2ffff"/><stop offset="0.35" stop-color="#dcffff"/><stop offset="0.40" stop-color="#e6ffff"/><stop offset="0.45" stop-color="#f0ffff"/><stop offset="0.50" stop-color="#f8fcfd"/><stop offset="0.55" stop-color="#fffafa"/><stop offset="0.60" stop-color="#fff2f2"/><stop offset="0.65" stop-color="#ffeaea"/><stop offset="0.70" stop-color="#ffe2e2"/><stop offset="0.75" stop-color="#ffdada"/><stop offset="0.80" stop-color="#ffd1d2"/><stop offset="0.85" stop-color="#ffc9c9"/><stop offset="0.90" stop-color="#ffc1c1"/><stop offset="0.95" stop-color="#ffb8b8"/><stop offset="1.00" stop-color="#ffb0b0"/></linearGradient>
<linearGradient id="cs25"><stop offset="0.00" stop-color="#a1fdff"/><stop offset="0.05" stop-color="#a9fcff"/><stop offset="0.10" stop-color="#b1fcff"/><stop offset="0.15" stop-color="#b8fcff"/><stop offset="0.20" stop-color="#c0fbff"/><stop offset="0.25" stop-color="#c8fbff"/><stop offset="0.30" stop-color="#d2fbff"/><stop offset="0.35" stop-color="#dcfbff"/><stop offset="0.40" stop-color="#e5fcff"/><stop offset="0.45" stop-color="#effcff"/><stop offset="0.50" stop-color="#f8fafd"/><stop offset="0.55" stop-color="#fff7fa"/><stop offset="0.60" stop-color="#ffeff2"/><stop offset="0.65" stop-color="#ffe7ea"/><stop offset="0.70" stop-color="#ffdfe2"/><stop offset="0.75" stop-color="#ffd7da"/><stop offset="0.80" stop-color="#ffcfd2"/><stop offset="0.85" stop-color="#ffc7c9"/><stop offset="0.90" stop-color="#ffbfc1"/><stop offset="0.95" stop-color="#ffb7b9"/><stop offset="1.00" stop-color="#ffafb1"/></linearGradient>
<linearGradient id="cs26"><stop offset="0.00" stop-color="#a2faff"/><stop offset="0.05" stop-color="#a9faff"/><stop offset="0.10" stop-color="#b1f9ff"/><stop offset="0.15" stop-color="#b9f9ff"/><stop offset="0.20" stop-color="#c0f8ff"/><stop offset="0.25" stop-color="#c8f8ff"/><stop offset="0.30" stop-color="#d2f8ff"/><stop offset="0.35" stop-color="#dbf8ff"/><stop offset="0.40" stop-color="#e5f8ff"/><stop offset="0.45" stop-color="#eef9ff"/><stop offset="0.50" stop-color="#f9f8fd"/><stop offset="0.55" stop-color="#fff5f9"/><stop offset="0.60" stop-color="#ffedf1"/><stop offset="0.65" stop-color="#ffe5e9"/><stop offset="0.70" stop-color="#ffdde2"/><stop offset="0.75" stop-color="#ffd5da"/><stop offset="0.80" stop-color="#ffcdd2"/><stop offset="0.85" stop-color="#ffc5ca"/><stop offset="0.90" stop-color="#ffbec2"/><stop offset="0.95" stop-color="#ffb6ba"/><stop offset="1.00" stop-color="#ffaeb2"/></linearGradient>
<linearGradient id="cs27"><stop offset="0.00" stop-color="#a2f8ff"/><stop offset="0.05" stop-color="#aaf7ff"/><stop offset="0.10" stop-color="#b1f6ff"/><stop offset="0.15" stop-color="#b9f6ff"/><stop offset="0.20" stop-color="#c0f5ff"/><stop offset="0.25" stop-color="#c8f4ff"/><stop offset="0.30" stop-color="#d1f4ff"/><stop offset="0.35" stop-color="#dbf5ff"/><stop offset="0.40" stop-color="#e4f5ff"/><stop offset="0.45" stop-color="#eef5ff"/><stop offset="0.50" stop-color="#faf6fd"/><stop offset="0.55" stop-color="#fff2f9"/><stop offset="0.60" stop-color="#ffeaf1"/><stop offset="0.65" stop-color="#ffe2e9"/><stop offset="0.70" stop-color="#ffdae1"/><stop offset="0.75" stop-color="#ffd2d9"/><stop offset="0.80" stop-color="#ffcbd2"/><stop offset="0.85" stop-color="#ffc3ca"/><stop offset="0.90" stop-color="#ffbcc2"/><stop offset="0.95" stop-color="#ffb5ba"/><stop offset="1.00" stop-color="#ffaeb2"/></linearGradient>
<linearGradient id="cs28"><stop offset="0.00" stop-color="#a3f6ff"/><stop offset="0.05" stop-color="#abf5ff"/><stop offset="0.10" stop-color="#b2f4ff"/><stop offset="0.15" stop-color="#b9f3ff"/><stop offset="0.20" stop-color="#c1f2ff"/><stop offset="0.25" stop-color="#c8f1ff"/><stop offset="0.30" stop-color="#d1f1ff"/><stop offset="0.35" stop-color="#daf1ff"/><stop offset="0.40" stop-color="#e4f2ff"/><stop offset="0.45" stop-color="#edf2ff"/><stop offset="0.50" stop-color="#fbf4fe"/><stop offset="0.55" stop-color="#ffeff9"/><stop offset="0.60" stop-color="#ffe7f1"/><stop offset="0.65" stop-color="#ffdfe9"/><stop offset="0.70" stop-color="#ffd7e1"/><stop offset="0.75" stop-color="#ffcfd9"/><stop offset="0.80" stop-color="#ffc8d2"/><stop offset="0.85" stop-color="#ffc1ca"/><stop offset="0.90" stop-color="#ffbbc2"/><stop offset="0.95" stop-color="#ffb4bb"/><stop offset="1.00" stop-color="#ffadb3"/></linearGradient>
<linearGradient id="cs29"><stop offset="0.00" stop-color="#a4f3ff"/><stop offset="0.05" stop-color="#abf2ff"/><stop offset="0.10" stop-color="#b2f1ff"/><stop offset="0.15" stop-color="#baf0ff"/><stop offset="0.20" stop-color="#c1eeff"/><stop offset="0.25" stop-color="#c8edff"/><stop offset="0.30" stop-color="#d1eeff"/><stop offset="0.35" stop-color="#daeeff"/><stop offset="0.40" stop-color="#e3efff"/><stop offset="0.45" stop-color="#ecefff"/><stop offset="0.50" stop-color="#fbf2fe"/><stop offset="0.55" stop-color="#ffedf9"/><stop offset="0.60" stop-color="#ffe5f1"/><stop offset="0.65" stop-color="#ffdde9"/><stop offset="0.70" stop-color="#ffd5e1"/><stop offset="0.75" stop-color="#ffcdd9"/><stop offset="0.80" stop-color="#ffc6d2"/><stop offset="0.85" stop-color="#ffc0ca"/><stop offset="0.90" stop-color="#ffb9c3"/><stop offset="0.95" stop-color="#ffb2bb"/><stop offset="1.00" stop-color="#ffacb4"/></linearGradient>
<linearGradient id="cs30"><stop offset="0.00" stop-color="#a5f1ff"/><stop offset="0.05" stop-color="#acefff"/><stop offset="0.10" stop-color="#b3eeff"/><stop offset="0.15" stop-color="#baecff"/><stop offset="0.20" stop-color="#c1ebff"/><stop offset="0.25" stop-color="#c8eaff"/><stop offset="0.30" stop-color="#d1eaff"/><stop offset="0.35" stop-color="#daebff"/><stop offset="0.40" stop-color="#e2ebff"/><stop offset="0.45" stop-color="#ebecff"/><stop offset="0.50" stop-color="#fcf0fe"/><stop offset="0.55" stop-color="#ffeaf8"/><stop offset="0.60" stop-color="#ffe2f0"/><stop offset="0.65" stop-color="#ffdae9"/><stop offset="0.70" stop-color="#ffd2e1"/><stop offset="0.75" stop-color="#ffcad9"/><stop offset="0.80" stop-color="#ffc4d2"/><stop offset="0.85" stop-color="#ffbeca"/><stop offset="0.90" stop-color="#ffb7c3"/><stop offset="0.95" stop-color="#ffb1bc"/><stop offset="1.00" stop-color="#ffabb5"/></linearGradient>
<linearGradient id="cs31"><stop offset="0.00" stop-color="#a6efff"/><stop offset="0.05" stop-color="#adedff"/><stop offset="0.10" stop-color="#b3ebff"/><stop offset="0.15" stop-color="#bae9ff"/><stop offset="0.20" stop-color="#c1e8ff"/><stop offset="0.25" stop-color="#c8e6ff"/><stop offset="0.30" stop-color="#d1e7ff"/><stop offset="0.35" stop-color="#d9e7ff"/><stop offset="0.40" stop-color="#e2e8ff"/><stop offset="0.45" stop-color="#eae9ff"/><stop offset="0.50" stop-color="#fdeefe"/><stop offset="0.55" stop-color="#ffe7f8"/><stop offset="0.60" stop-color="#ffdff0"/><stop offset="0.65" stop-color="#ffd7e8"/><stop offset="0.70" stop-color="#ffcfe0"/><stop offset="0.75" stop-color="#ffc7d9"/><stop offset="0.80" stop-color="#ffc2d2"/><stop offset="0.85" stop-color="#ffbccb"/><stop offset="0.90" stop-color="#ffb6c4"/><stop offset="0.95" stop-color="#ffb0bd"/><stop offset="1.00" stop-color="#ffaab6"/></linearGradient>
<linearGradient id="cs32"><stop offset="0.00" stop-color="#a7ecff"/><stop offset="0.05" stop-color="#adeaff"/><stop offset="0.10" stop-color="#b4e8ff"/><stop offset="0.15" stop-color="#bbe6ff"/><stop offset="0.20" stop-color="#c1e4ff"/><stop offset="0.25" stop-color="#c8e2ff"/><stop offset="0.30" stop-color="#d0e3ff"/><stop offset="0.35" stop-color="#d9e4ff"/><stop offset="0.40" stop-color="#e1e5ff"/><stop offset="0.45" stop-color="#e9e6ff"/><stop offset="0.50" stop-color="#feecff"/><stop offset="0.55" stop-color="#ffe5f8"/><stop offset="0.60" stop-color="#ffddf0"/><stop offset="0.65" stop-color="#ffd5e8"/><stop offset="0.70" stop-color="#ffcde0"/><stop offset="0.75" stop-color="#ffc5d8"/><stop offset="0.80" stop-color="#ffbfd2"/><stop offset="0.85" stop-color="#ffbacb"/><stop offset="0.90" stop-color="#ffb4c4"/><stop offset="0.95" stop-color="#ffafbd"/><stop offset="1.00" stop-color="#ffa9b7"/></linearGradient>
<linearGradient id="cs33"><stop offset="0.00" stop-color="#a7eaff"/><stop offset="0.05" stop-color="#aee8ff"/><stop offset="0.10" stop-color="#b4e5ff"/><stop offset="0.15" stop-color="#bbe3ff"/><stop offset="0.20" stop-color="#c1e1ff"/><stop offset="0.25" stop-color="#c8dfff"/><stop offset="0.30" stop-color="#d0e0ff"/><stop offset="0.35" stop-color="#d8e1ff"/><stop offset="0.40" stop-color="#e0e2ff"/><stop offset="0.45" stop-color="#e9e3ff"/><stop offset="0.50" stop-color="#feeaff"/><stop offset="0.55" stop-color="#ffe2f7"/><stop offset="0.60" stop-color="#ffdaf0"/><stop offset="0.65" stop-color="#ffd2e8"/><stop offset="0.70" stop-color="#ffcae0"/><stop offset="0.75" stop-color="#ffc2d8"/><stop offset="0.80" stop-color="#ffbdd2"/><stop offset="0.85" stop-color="#ffb8cb"/><stop offset="0.90" stop-color="#ffb3c4"/><stop offset="0.95" stop-color="#ffaebe"/><stop offset="1.00" stop-color="#ffa9b7"/></linearGradient>
<linearGradient id="cs34"><stop offset="0.00" stop-color="#a8e8ff"/><stop offset="0.05" stop-color="#aee5ff"/><stop offset="0.10" stop-color="#b5e3ff"/><stop offset="0.15" stop-color="#bbe0ff"/><stop offset="0.20" stop-color="#c2deff"/><stop offset="0.25" stop-color="#c8dcff"/><stop offset="0.30" stop-color="#d0ddff"/><stop offset="0.35" stop-color="#d8deff"/><stop offset="0.40" stop-color="#e0dfff"/><stop offset="0.45" stop-color="#e8e0ff"/><stop offset="0.50" stop-color="#ffe8ff"/><stop offset="0.55" stop-color="#ffe0f7"/><stop offset="0.60" stop-color="#ffd8ef"/><stop offset="0.65" stop-color="#ffd0e8"/><stop offset="0.70" stop-color="#ffc8e0"/><stop offset="0.75" stop-color="#ffc0d8"/><stop offset="0.80" stop-color="#ffbbd2"/><stop offset="0.85" stop-color="#ffb6cb"/><stop offset="0.90" stop-color="#ffb1c5"/><stop offset="0.95" stop-color="#ffacbe"/><stop offset="1.00" stop-color="#ffa8b8"/></linearGradient>
<linearGradient id="cs35"><stop offset="0.00" stop-color="#a8e6ff"/><stop offset="0.05" stop-color="#afe3ff"/><stop offset="0.10" stop-color="#b5e1ff"/><stop offset="0.15" stop-color="#bcdfff"/><stop offset="0.20" stop-color="#c2dcff"/><stop offset="0.25" stop-color="#c9daff"/><stop offset="0.30" stop-color="#d1dbff"/><stop offset="0.35" stop-color="#d9dcff"/><stop offset="0.40" stop-color="#e1ddff"/><stop offset="0.45" stop-color="#e9deff"/><stop offset="0.50" stop-color="#ffe6ff"/><stop offset="0.55" stop-color="#ffdef7"/><stop offset="0.60" stop-color="#ffd6ef"/><stop offset="0.65" stop-color="#ffcee8"/><stop offset="0.70" stop-color="#ffc6e0"/><stop offset="0.75" stop-color="#ffbed8"/><stop offset="0.80" stop-color="#ffbad2"/><stop offset="0.85" stop-color="#ffb5cb"/><stop offset="0.90" stop-color="#ffb0c5"/><stop offset="0.95" stop-color="#ffabbe"/><stop offset="1.00" stop-color="#ffa6b8"/></linearGradient>
<linearGradient id="cs36"><stop offset="0.00" stop-color="#a8e4ff"/><stop offset="0.05" stop-color="#afe2ff"/><stop offset="0.10" stop-color="#b5dfff"/><stop offset="0.15" stop-color="#bcddff"/><stop offset="0.20" stop-color="#c3dbff"/><stop offset="0.25" stop-color="#c9d9ff"/><stop offset="0.30" stop-color="#d2daff"/><stop offset="0.35" stop-color="#dadbff"/><stop offset="0.40" stop-color="#e2dcff"/><stop offset="0.45" stop-color="#eaddff"/><stop offset="0.50" stop-color="#ffe4ff"/><stop offset="0.55" stop-color="#ffdcf7"/><stop offset="0.60" stop-color="#ffd4ef"/><stop offset="0.65" stop-color="#ffcde8"/><stop offset="0.70" stop-color="#ffc5e0"/><stop offset="0.75" stop-color="#ffbdd8"/><stop offset="0.80" stop-color="#ffb8d2"/><stop offset="0.85" stop-color="#ffb3cb"/><stop offset="0.90" stop-color="#ffaec5"/><stop offset="0.95" stop-color="#ffa9be"/><stop offset="1.00" stop-color="#ffa4b8"/></linearGradient>
<linearGradient id="cs37"><stop offset="0.00" stop-color="#a8e2ff"/><stop offset="0.05" stop-color="#afe0ff"/><stop offset="0.10" stop-color="#b6deff"/><stop offset="0.15" stop-color="#bcdbff"/><stop offset="0.20" stop-color="#c3d9ff"/><stop offset="0.25" stop-color="#cad7ff"/><stop offset="0.30" stop-color="#d2d8ff"/><stop offset="0.35" stop-color="#dbd9ff"/><stop offset="0.40" stop-color="#e3daff"/><stop offset="0.45" stop-color="#ebdcff"/><stop offset="0.50" stop-color="#ffe2ff"/><stop offset="0.55" stop-color="#ffdaf7"/><stop offset="0.60" stop-color="#ffd3ef"/><stop offset="0.65" stop-color="#ffcbe8"/><stop offset="0.70" stop-color="#ffc4e0"/><stop offset="0.75" stop-color="#ffbcd8"/><stop offset="0.80" stop-color="#ffb7d2"/><stop offset="0.85" stop-color="#ffb2cb"/><stop offset="0.90" stop-color="#ffacc5"/><stop offset="0.95" stop-color="#ffa7be"/><stop offset="1.00" stop-color="#ffa2b8"/></linearGradient>
<linearGradient id="cs38"><stop offset="0.00" stop-color="#a8e0ff"/><stop offset="0.05" stop-color="#afdeff"/><stop offset="0.10" stop-color="#b6dcff"/><stop offset="0.15" stop-color="#bddaff"/><stop offset="0.20" stop-color="#c4d8ff"/><stop offset="0.25" stop-color="#cbd5ff"/><stop offset="0.30" stop-color="#d3d7ff"/><stop offset="0.35" stop-color="#dcd8ff"/><stop offset="0.40" stop-color="#e4d9ff"/><stop offset="0.45" stop-color="#ecdaff"/><stop offset="0.50" stop-color="#ffe0ff"/><stop offset="0.55" stop-color="#ffd9f7"/><stop offset="0.60" stop-color="#ffd1ef"/><stop offset="0.65" stop-color="#ffcae8"/><stop offset="0.70" stop-color="#ffc2e0"/><stop offset="0.75" stop-color="#ffbbd8"/><stop offset="0.80" stop-color="#ffb5d2"/><stop offset="0.85" stop-color="#ffb0cb"/><stop offset="0.90" stop-color="#ffabc5"/><stop offset="0.95" stop-color="#ffa5be"/><stop offset="1.00" stop-color="#ffa0b8"/></linearGradient>
<linearGradient id="cs39"><stop offset="0.00" stop-color="#a8deff"/><stop offset="0.05" stop-color="#afdcff"/><stop offset="0.10" stop-color="#b6daff"/><stop offset="0.15" stop-color="#bdd8ff"/><stop offset="0.20" stop-color="#c4d6ff"/><stop offset="0.25" stop-color="#cbd4ff"/><stop offset="0.30" stop-color="#d4d5ff"/><stop offset="0.35" stop-color="#dcd6ff"/><stop offset="0.40" stop-color="#e5d8ff"/><stop offset="0.45" stop-color="#eed9ff"/><stop offset="0.50" stop-color="#ffdeff"/><stop offset="0.55" stop-color="#ffd7f7"/><stop offset="0.60" stop-color="#ffcfef"/><stop offset="0.65" stop-color="#ffc8e8"/><stop offset="0.70" stop-color="#ffc1e0"/><stop offset="0.75" stop-color="#ffb9d8"/><stop offset="0.80" stop-color="#ffb4d2"/><stop offset="0.85" stop-color="#ffafcb"/><stop offset="0.90" stop-color="#ffa9c5"/><stop offset="0.95" stop-color="#ffa4be"/><stop offset="1.00" stop-color="#ff9eb8"/></linearGradient>
<linearGradient id="cs40"><stop offset="0.00" stop-color="#a8dcff"/><stop offset="0.05" stop-color="#afdaff"/><stop offset="0.10" stop-color="#b6d8ff"/><stop offset="0.15" stop-color="#bed6ff"/><stop offset="0.20" stop-color="#c5d4ff"/><stop offset="0.25" stop-color="#ccd2ff"/><stop offset="0.30" stop-color="#d5d4ff"/><stop offset="0.35" stop-color="#ddd5ff"/><stop offset="0.40" stop-color="#e6d6ff"/><stop offset="0.45" stop-color="#efd7ff"/><stop offset="0.50" stop-color="#ffdcff"/><stop offset="0.55" stop-color="#ffd5f7"/><stop offset="0.60" stop-color="#ffceef"/><stop offset="0.65" stop-color="#ffc7e8"/><stop offset="0.70" stop-color="#ffbfe0"/><stop offset="0.75" stop-color="#ffb8d8"/><stop offset="0.80" stop-color="#ffb3d2"/><stop offset="0.85" stop-color="#ffadcb"/><stop offset="0.90" stop-color="#ffa7c5"/><stop offset="0.95" stop-color="#ffa2be"/><stop offset="1.00" stop-color="#ff9cb8"/></linearGradient>
<linearGradient id="cs41"><stop offset="0.00" stop-color="#a8daff"/><stop offset="0.05" stop-color="#afd8ff"/><stop offset="0.10" stop-color="#b7d7ff"/><stop offset="0.15" stop-color="#bed5ff"/><stop offset="0.20" stop-color="#c5d3ff"/><stop offset="0.25" stop-color="#cdd1ff"/><stop offset="0.30" stop-color="#d5d2ff"/><stop offset="0.35" stop-color="#ded3ff"/><stop offset="0.40" stop-color="#e7d5ff"/><stop offset="0.45" stop-color="#f0d6ff"/><stop offset="0.50" stop-color="#ffdaff"/><stop offset="0.55" stop-color="#ffd3f7"/><stop offset="0.60" stop-color="#ffccef"/><stop offset="0.65" stop-color="#ffc5e8"/><stop offset="0.70" stop-color="#ffbee0"/><stop offset="0.75" stop-color="#ffb7d8"/><stop offset="0.80" stop-color="#ffb1d2"/><stop offset="0.85" stop-color="#ffaccb"/><stop offset="0.90" stop-color="#ffa6c5"/><stop offset="0.95" stop-color="#ffa0be"/><stop offset="1.00" stop-color="#ff9ab8"/></linearGradient>
<linearGradient id="cs42"><stop offset="0.00" stop-color="#a8d9ff"/><stop offset="0.05" stop-color="#afd7ff"/><stop offset="0.10" stop-color="#b7d5ff"/><stop offset="0.15" stop-color="#bed3ff"/><stop offset="0.20" stop-color="#c6d1ff"/><stop offset="0.25" stop-color="#cdcfff"/><stop offset="0.30" stop-color="#d6d0ff"/><stop offset="0.35" stop-color="#dfd2ff"/><stop offset="0.40" stop-color="#e8d3ff"/><stop offset="0.45" stop-color="#f1d5ff"/><stop offset="0.50" stop-color="#ffd9ff"/><stop offset="0.55" stop-color="#ffd2f7"/><stop offset="0.60" stop-color="#ffcbef"/><stop offset="0.65" stop-color="#ffc4e8"/><stop offset="0.70" stop-color="#ffbde0"/><stop offset="0.75" stop-color="#ffb6d8"/><stop offset="0.80" stop-color="#ffb0d2"/><stop offset="0.85" stop-color="#ffaacb"/><stop offset="0.90" stop-color="#ffa4c5"/><stop offset="0.95" stop-color="#ff9ebe"/><stop offset="1.00" stop-color="#ff99b8"/></linearGradient>
<linearGradient id="cs43"><stop offset="0.00" stop-color="#a8d7ff"/><stop offset="0.05" stop-color="#b0d5ff"/><stop offset="0.10" stop-color="#b7d3ff"/><stop offset="0.15" stop-color="#bfd1ff"/><stop offset="0.20" stop-color="#c6cfff"/><stop offset="0.25" stop-color="#ceceff"/><stop offset="0.30" stop-color="#d7cfff"/><stop offset="0.35" stop-color="#e0d0ff"/><stop offset="0.40" stop-color="#e9d2ff"/><stop offset="0.45" stop-color="#f2d3ff"/><stop offset="0.50" stop-color="#ffd7ff"/><stop offset="0.55" stop-color="#ffd0f7"/><stop offset="0.60" stop-color="#ffc9ef"/><stop offset="0.65" stop-color="#ffc2e8"/><stop offset="0.70" stop-color="#ffbbe0"/><stop offset="0.75" stop-color="#ffb4d8"/><stop offset="0.80" stop-color="#ffaed2"/><stop offset="0.85" stop-color="#ffa8cb"/><stop offset="0.90" stop-color="#ffa3c5"/><stop offset="0.95" stop-color="#ff9dbe"/><stop offset="1.00" stop-color="#ff97b8"/></linearGradient>
<linearGradient id="cs44"><stop offset="0.00" stop-color="#a8d5ff"/><stop offset="0.05" stop-color="#b0d3ff"/><stop offset="0.10" stop-color="#b7d1ff"/><stop offset="0.15" stop-color="#bfcfff"/><stop offset="0.20" stop-color="#c7ceff"/><stop offset="0.25" stop-color="#ceccff"/><stop offset="0.30" stop-color="#d8cdff"/><stop offset="0.35" stop-color="#e1cfff"/><stop offset="0.40" stop-color="#ead0ff"/><stop offset="0.45" stop-color="#f3d2ff"/><stop offset="0.50" stop-color="#ffd5ff"/><stop offset="0.55" stop-color="#ffcef7"/><stop offset="0.60" stop-color="#ffc7ef"/><stop offset="0.65" stop-color="#ffc1e8"/><stop offset="0.70" stop-color="#ffbae0"/><stop offset="0.75" stop-color="#ffb3d8"/><stop offset="0.80" stop-color="#ffadd2"/><stop offset="0.85" stop-color="#ffa7cb"/><stop offset="0.90" stop-color="#ffa1c5"/><stop offset="0.95" stop-color="#ff9bbe"/><stop offset="1.00" stop-color="#ff95b8"/></linearGradient>
<linearGradient id="cs45"><stop offset="0.00" stop-color="#a8d3ff"/><stop offset="0.05" stop-color="#b0d1ff"/><stop offset="0.10" stop-color="#b8cfff"/><stop offset="0.15" stop-color="#bfceff"/><stop offset="0.20" stop-color="#c7ccff"/><stop offset="0.25" stop-color="#cfcaff"/><stop offset="0.30" stop-color="#d8ccff"/><stop offset="0.35" stop-color="#e2cdff"/><stop offset="0.40" stop-color="#ebcfff"/><stop offset="0.45" stop-color="#f4d0ff"/><stop offset="0.50" stop-color="#ffd3ff"/><stop offset="0.55" stop-color="#ffccf7"/><stop offset="0.60" stop-color="#ffc6ef"/><stop offset="0.65" stop-color="#ffbfe8"/><stop offset="0.70" stop-color="#ffb8e0"/><stop offset="0.75" stop-color="#ffb2d8"/><stop offset="0.80" stop-color="#ffacd2"/><stop offset="0.85" stop-color="#ffa5cb"/><stop offset="0.90" stop-color="#ff9fc5"/><stop offset="0.95" stop-color="#ff99be"/><stop offset="1.00" stop-color="#ff93b8"/></linearGradient>
<linearGradient id="cs46"><stop offset="0.00" stop-color="#a8d1ff"/><stop offset="0.05" stop-color="#b0cfff"/><stop offset="0.10" stop-color="#b8ceff"/><stop offset="0.15" stop-color="#c0ccff"/><stop offset="0.20" stop-color="#c8caff"/><stop offset="0.25" stop-color="#d0c9ff"/><stop offset="0.30" stop-color="#d9caff"/><stop offset="0.35" stop-color="#e2ccff"/><stop offset="0.40" stop-color="#ecceff"/><stop offset="0.45" stop-color="#f5cfff"/><stop offset="0.50" stop-color="#ffd1ff"/><stop offset="0.55" stop-color="#ffcaf7"/><stop offset="0.60" stop-color="#ffc4ef"/><stop offset="0.65" stop-color="#ffbee8"/><stop offset="0.70" stop-color="#ffb7e0"/><stop offset="0.75" stop-color="#ffb1d8"/><stop offset="0.80" stop-color="#ffaad2"/><stop offset="0.85" stop-color="#ffa4cb"/><stop offset="0.90" stop-color="#ff9ec5"/><stop offset="0.95" stop-color="#ff97be"/><stop offset="1.00" stop-color="#ff91b8"/></linearGradient>
<linearGradient id="selg" x1="0" y1="0" x2="0" y2="1"><stop offset="0" stop-color="#1c1c1c"/><stop offset="1" stop-color="#343434"/></linearGradient>
<linearGradient id="pbg" x1="0" y1="0" x2="0" y2="1">
<stop offset="0" stop-color="#ababab"/><stop offset="0.12" stop-color="#a0a0a0"/><stop offset="0.6" stop-color="#888888"/><stop offset="1" stop-color="#585858"/></linearGradient>
<linearGradient id="cbg" x1="0" y1="0" x2="0" y2="1">
<stop offset="0" stop-color="#a4a4a4"/><stop offset="1" stop-color="#6a6a6a"/></linearGradient>
<radialGradient id="cdd" cx="0.5" cy="0.2" r="0.8">
<stop offset="0" stop-color="#5e5e5e"/><stop offset="1" stop-color="#b0b0b0"/></radialGradient>
<linearGradient id="dkg" x1="0" y1="0" x2="0" y2="1"><stop offset="0" stop-color="#3a3a3a"/><stop offset="1" stop-color="#1c1c1c"/></linearGradient>
</defs>
<rect x="0" y="0" width="1912" height="23" fill="#ffffff" />
<rect x="0" y="23" width="1912" height="66" fill="#232323" />
<rect x="0" y="89" width="1912" height="486" fill="#333333" />
<rect x="0" y="575" width="1912" height="142" fill="#000000" />
<rect x="0" y="717" width="1912" height="323" fill="#333333" />
<rect x="0" y="89" width="1" height="889" fill="#222222" />
<circle cx="10" cy="11" r="7.6" fill="url(#ring)"/>
<circle cx="10" cy="11" r="5.8" fill="#000"/>
<text x="10" y="13.2" font-size="6.5" fill="#fff" text-anchor="middle" textLength="9" lengthAdjust="spacingAndGlyphs" font-weight="bold" >CM</text>
<text x="23.5" y="15.7" font-size="12.3" fill="#000" textLength="342" lengthAdjust="spacingAndGlyphs" >CalMAN 2017 CalMAN Ultimate for Business 179 Days Remaining</text>
<line x1="1799" y1="10.5" x2="1809" y2="10.5" stroke="#000" stroke-width="1" />
<rect x="1844.5" y="7.5" width="7.5" height="7.5" fill="none" stroke="#000" stroke-width="1"/>
<path d="M1846.5 7.5 V5.5 H1854 V13 H1852" fill="none" stroke="#000" stroke-width="1"/>
<path d="M1890 5.2 L1900 14.9 M1900 5.2 L1890 14.9" stroke="#000" stroke-width="1"/>
<path d="M1 23 H182 V49 Q182 52.5 178.5 52.5 H4.5 Q1 52.5 1 49 Z" fill="url(#redg)" stroke="#9a9a9a" stroke-width="0.8"/>
<text x="14" y="47.6" font-size="30.5" fill="#fff" stroke="#fff" stroke-width="1.5" stroke-linejoin="round" textLength="128" lengthAdjust="spacing">CalMAN</text>
<circle cx="166" cy="37" r="10" fill="url(#reddd)"/>
<path d="M161.8 35.5 H170.6 L166.2 40.8 Z" fill="#fff"/>
<rect x="190" y="35" width="1722" height="5" fill="url(#rainbow)" />
<path d="M-2 58.5 H24 Q27 58.5 27 61.5 V82.5 Q27 85.5 24 85.5 H-2 Z" fill="url(#playg)" stroke="#d0d0d0" stroke-width="0.9"/>
<circle cx="13" cy="71.5" r="10" fill="url(#btnc)"/>
<path d="M10 67 L16 71.5 L10 76 Z" fill="#fff"/>
<path d="M29.5 89 V61.5 Q29.5 58.5 32.5 58.5 H118 Q121 58.5 121 61.5 V89" fill="url(#tabg)" stroke="#808080" stroke-width="1"/>
<line x1="87.5" y1="59" x2="87.5" y2="89" stroke="#707070" stroke-width="1" />
<text x="35.5" y="77.8" font-size="11.3" fill="#e0e0e0" textLength="46.5" lengthAdjust="spacingAndGlyphs" stroke="#e0e0e0" stroke-width="0.25">History 1</text>
<circle cx="103" cy="75" r="9.5" fill="#363636"/>
<text x="103" y="79.5" font-size="13" fill="#777" text-anchor="middle" >+</text>
<path d="M1312 88.5 V61.5 Q1312 58.5 1315 58.5 H1452 Q1455 58.5 1455 61.5 V88.5 Z" fill="url(#panelg)"/>
<path d="M1312 88.5 V61.5 Q1312 58.5 1315 58.5 H1317 V88.5 Z" fill="#00d800"/>
<text x="1320.5" y="69.5" font-size="11.3" fill="#e6e6e6" textLength="66" lengthAdjust="spacingAndGlyphs" stroke="#e6e6e6" stroke-width="0.2">X-Rite i1Pro 2</text>
<text x="1320.5" y="83" font-size="11.3" fill="#e6e6e6" textLength="56" lengthAdjust="spacingAndGlyphs" stroke="#e6e6e6" stroke-width="0.2">Direct View</text>
<circle cx="1399" cy="72.9" r="9.2" fill="url(#ddg)"/>
<path d="M1394 72 H1404 L1399 77 Z" fill="#fff"/>
<line x1="1418.5" y1="61" x2="1418.5" y2="88.5" stroke="#3a3a3a" stroke-width="1.2" />
<circle cx="1439" cy="73" r="12.5" fill="#0000f8" stroke="#f0f0ff" stroke-width="1.2"/>
<text x="1439" y="76.3" font-size="9" fill="#fff" text-anchor="middle" textLength="15" lengthAdjust="spacingAndGlyphs" >239</text>
<path d="M1461 88.5 V61.5 Q1461 58.5 1464 58.5 H1665.5 Q1668.5 58.5 1668.5 61.5 V88.5 Z" fill="url(#panelg)"/>
<path d="M1461 88.5 V61.5 Q1461 58.5 1464 58.5 H1466 V88.5 Z" fill="#00d800"/>
<text x="1469" y="69.5" font-size="11.3" fill="#e6e6e6" textLength="171" lengthAdjust="spacingAndGlyphs" stroke="#e6e6e6" stroke-width="0.2">CalMAN Client 3 Pattern Generator</text>
<circle cx="1652.5" cy="72.9" r="9.2" fill="url(#ddg)"/>
<path d="M1647.5 72 H1657.5 L1652.5 77 Z" fill="#fff"/>
<path d="M1675 88.5 V61.5 Q1675 58.5 1678 58.5 H1815 Q1818 58.5 1818 61.5 V88.5 Z" fill="url(#panelg)"/>
<path d="M1675 88.5 V61.5 Q1675 58.5 1678 58.5 H1680 V88.5 Z" fill="#e4e400"/>
<text x="1683.5" y="69.5" font-size="11.3" fill="#e6e6e6" textLength="105" lengthAdjust="spacingAndGlyphs" stroke="#e6e6e6" stroke-width="0.2">Direct Display Control</text>
<circle cx="1802" cy="72.9" r="9.2" fill="url(#ddg)"/>
<path d="M1797 72 H1807 L1802 77 Z" fill="#fff"/>
<rect x="1821.5" y="58.5" width="33" height="27.5" rx="4" fill="url(#btng)" stroke="#d8d8d8" stroke-width="1"/>
<circle cx="1838" cy="72" r="9.7" fill="url(#btnc)"/>
<rect x="1857.5" y="58.5" width="33" height="27.5" rx="4" fill="url(#btng)" stroke="#d8d8d8" stroke-width="1"/>
<circle cx="1874" cy="72" r="9.7" fill="url(#btnc)"/>
<rect x="1893.5" y="58.5" width="30" height="27.5" rx="4" fill="url(#btng)" stroke="#d8d8d8" stroke-width="1"/>
<circle cx="1910.5" cy="72" r="9.7" fill="url(#btnc)"/>
<rect x="1836.8" y="65.5" width="2.4" height="3" fill="#dcdcdc" transform="rotate(22.5 1838 72.1)"/><rect x="1836.8" y="65.5" width="2.4" height="3" fill="#dcdcdc" transform="rotate(67.5 1838 72.1)"/><rect x="1836.8" y="65.5" width="2.4" height="3" fill="#dcdcdc" transform="rotate(112.5 1838 72.1)"/><rect x="1836.8" y="65.5" width="2.4" height="3" fill="#dcdcdc" transform="rotate(157.5 1838 72.1)"/><rect x="1836.8" y="65.5" width="2.4" height="3" fill="#dcdcdc" transform="rotate(202.5 1838 72.1)"/><rect x="1836.8" y="65.5" width="2.4" height="3" fill="#dcdcdc" transform="rotate(247.5 1838 72.1)"/><rect x="1836.8" y="65.5" width="2.4" height="3" fill="#dcdcdc" transform="rotate(292.5 1838 72.1)"/><rect x="1836.8" y="65.5" width="2.4" height="3" fill="#dcdcdc" transform="rotate(337.5 1838 72.1)"/>
<circle cx="1838" cy="72.1" r="3.9" fill="none" stroke="#dcdcdc" stroke-width="2"/>
<text x="1874" y="77.9" font-size="16.5" fill="#f0f0f0" text-anchor="middle" font-weight="bold" >?</text>
<path d="M1909 67 L1903 72.2 L1909 77.4 Z" fill="#fff"/>
<text x="28.5" y="152" font-size="42.5" fill="#efefef" textLength="192" lengthAdjust="spacingAndGlyphs" stroke="#efefef" stroke-width="0.5">Grayscale</text>
<rect x="52" y="212" width="357.3" height="272.2" fill="#232323" />
<line x1="99.47999999999999" y1="212" x2="99.47999999999999" y2="484.2" stroke="#8c8c8c" stroke-width="1.6" />
<line x1="146.95999999999998" y1="212" x2="146.95999999999998" y2="484.2" stroke="#8c8c8c" stroke-width="1.6" />
<line x1="194.44" y1="212" x2="194.44" y2="484.2" stroke="#8c8c8c" stroke-width="1.6" />
<line x1="241.92" y1="212" x2="241.92" y2="484.2" stroke="#8c8c8c" stroke-width="1.6" />
<line x1="289.4" y1="212" x2="289.4" y2="484.2" stroke="#8c8c8c" stroke-width="1.6" />
<line x1="336.88" y1="212" x2="336.88" y2="484.2" stroke="#8c8c8c" stroke-width="1.6" />
<line x1="384.35999999999996" y1="212" x2="384.35999999999996" y2="484.2" stroke="#8c8c8c" stroke-width="1.6" />
<text x="216" y="206.4" font-size="14.5" fill="#d2d2d2" text-anchor="middle" textLength="91" lengthAdjust="spacingAndGlyphs" >DeltaE 2000</text>
<line x1="45" y1="459.45454545454544" x2="52" y2="459.45454545454544" stroke="#bbbbbb" stroke-width="2" />
<text x="51" y="479.0272727272727" font-size="16.5" fill="#d2d2d2" text-anchor="end" >0</text>
<rect x="52.5" y="463.3272727272727" width="40.544999999999995" height="17" fill="url(#bar0)" stroke="#000" stroke-width="1.6"/>
<line x1="45" y1="434.7090909090909" x2="52" y2="434.7090909090909" stroke="#bbbbbb" stroke-width="2" />
<text x="51" y="454.28181818181815" font-size="16.5" fill="#d2d2d2" text-anchor="end" >10</text>
<rect x="52.5" y="438.58181818181816" width="46.242599999999996" height="17" fill="url(#bar1)" stroke="#000" stroke-width="1.6"/>
<line x1="45" y1="409.96363636363634" x2="52" y2="409.96363636363634" stroke="#bbbbbb" stroke-width="2" />
<text x="51" y="429.5363636363636" font-size="16.5" fill="#d2d2d2" text-anchor="end" >20</text>
<rect x="52.5" y="413.8363636363636" width="18.2294" height="17" fill="url(#bar2)" stroke="#000" stroke-width="1.6"/>
<line x1="45" y1="385.2181818181818" x2="52" y2="385.2181818181818" stroke="#bbbbbb" stroke-width="2" />
<text x="51" y="404.79090909090905" font-size="16.5" fill="#d2d2d2" text-anchor="end" >30</text>
<rect x="52.5" y="389.09090909090907" width="20.6034" height="17" fill="url(#bar3)" stroke="#000" stroke-width="1.6"/>
<line x1="45" y1="360.47272727272724" x2="52" y2="360.47272727272724" stroke="#bbbbbb" stroke-width="2" />
<text x="51" y="380.0454545454545" font-size="16.5" fill="#d2d2d2" text-anchor="end" >40</text>
<rect x="52.5" y="364.3454545454545" width="4.935" height="17" fill="url(#bar4)" stroke="#000" stroke-width="1.6"/>
<line x1="45" y1="335.72727272727275" x2="52" y2="335.72727272727275" stroke="#bbbbbb" stroke-width="2" />
<text x="51" y="355.3" font-size="16.5" fill="#d2d2d2" text-anchor="end" >50</text>
<rect x="52.5" y="339.6" width="10.395199999999999" height="17" fill="url(#bar5)" stroke="#000" stroke-width="1.6"/>
<line x1="45" y1="310.9818181818182" x2="52" y2="310.9818181818182" stroke="#bbbbbb" stroke-width="2" />
<text x="51" y="330.55454545454546" font-size="16.5" fill="#d2d2d2" text-anchor="end" >60</text>
<rect x="52.5" y="314.8545454545455" width="14.6684" height="17" fill="url(#bar6)" stroke="#000" stroke-width="1.6"/>
<line x1="45" y1="286.23636363636365" x2="52" y2="286.23636363636365" stroke="#bbbbbb" stroke-width="2" />
<text x="51" y="305.8090909090909" font-size="16.5" fill="#d2d2d2" text-anchor="end" >70</text>
<rect x="52.5" y="290.1090909090909" width="31.2864" height="17" fill="url(#bar7)" stroke="#000" stroke-width="1.6"/>
<line x1="45" y1="261.4909090909091" x2="52" y2="261.4909090909091" stroke="#bbbbbb" stroke-width="2" />
<text x="51" y="281.06363636363636" font-size="16.5" fill="#d2d2d2" text-anchor="end" >80</text>
<rect x="52.5" y="265.3636363636364" width="30.5742" height="17" fill="url(#bar8)" stroke="#000" stroke-width="1.6"/>
<line x1="45" y1="236.74545454545452" x2="52" y2="236.74545454545452" stroke="#bbbbbb" stroke-width="2" />
<text x="51" y="256.3181818181818" font-size="16.5" fill="#d2d2d2" text-anchor="end" >90</text>
<rect x="52.5" y="240.6181818181818" width="15.617999999999999" height="17" fill="url(#bar9)" stroke="#000" stroke-width="1.6"/>
<line x1="45" y1="212.0" x2="52" y2="212.0" stroke="#bbbbbb" stroke-width="2" />
<text x="51" y="231.57272727272726" font-size="16.5" fill="#d2d2d2" text-anchor="end" >100</text>
<rect x="52.5" y="215.87272727272727" width="24.8766" height="17" fill="url(#bar10)" stroke="#000" stroke-width="1.6"/>
<line x1="45" y1="212.8" x2="52" y2="212.8" stroke="#bbbbbb" stroke-width="2" />
<line x1="45" y1="484.2" x2="52" y2="484.2" stroke="#bbbbbb" stroke-width="2" />
<rect x="52" y="212" width="357.3" height="272.2" fill="none" stroke="#999" stroke-width="2"/>
<line x1="52.0" y1="484.2" x2="52.0" y2="491" stroke="#cfcfcf" stroke-width="2" />
<text x="52.0" y="508" font-size="16.5" fill="#d2d2d2" text-anchor="middle" >0</text>
<line x1="99.47999999999999" y1="484.2" x2="99.47999999999999" y2="491" stroke="#cfcfcf" stroke-width="2" />
<text x="99.47999999999999" y="508" font-size="16.5" fill="#d2d2d2" text-anchor="middle" >2</text>
<line x1="146.95999999999998" y1="484.2" x2="146.95999999999998" y2="491" stroke="#cfcfcf" stroke-width="2" />
<text x="146.95999999999998" y="508" font-size="16.5" fill="#d2d2d2" text-anchor="middle" >4</text>
<line x1="194.44" y1="484.2" x2="194.44" y2="491" stroke="#cfcfcf" stroke-width="2" />
<text x="194.44" y="508" font-size="16.5" fill="#d2d2d2" text-anchor="middle" >6</text>
<line x1="241.92" y1="484.2" x2="241.92" y2="491" stroke="#cfcfcf" stroke-width="2" />
<text x="241.92" y="508" font-size="16.5" fill="#d2d2d2" text-anchor="middle" >8</text>
<line x1="289.4" y1="484.2" x2="289.4" y2="491" stroke="#cfcfcf" stroke-width="2" />
<text x="289.4" y="508" font-size="16.5" fill="#d2d2d2" text-anchor="middle" >10</text>
<line x1="336.88" y1="484.2" x2="336.88" y2="491" stroke="#cfcfcf" stroke-width="2" />
<text x="336.88" y="508" font-size="16.5" fill="#d2d2d2" text-anchor="middle" >12</text>
<line x1="384.35999999999996" y1="484.2" x2="384.35999999999996" y2="491" stroke="#cfcfcf" stroke-width="2" />
<text x="384.35999999999996" y="508" font-size="16.5" fill="#d2d2d2" text-anchor="middle" >14</text>
<rect x="485" y="137.5" width="660" height="346.7" fill="#232323" />
<line x1="485" y1="173.7" x2="1145" y2="173.7" stroke="#9a9a9a" stroke-width="1.6" />
<line x1="478" y1="173.7" x2="485" y2="173.7" stroke="#cfcfcf" stroke-width="2" />
<text x="479" y="179.5" font-size="16.5" fill="#d2d2d2" text-anchor="end" >40</text>
<line x1="485" y1="242.95" x2="1145" y2="242.95" stroke="#9a9a9a" stroke-width="1.6" />
<line x1="478" y1="242.95" x2="485" y2="242.95" stroke="#cfcfcf" stroke-width="2" />
<text x="479" y="248.75" font-size="16.5" fill="#d2d2d2" text-anchor="end" >20</text>
<line x1="485" y1="312.2" x2="1145" y2="312.2" stroke="#9a9a9a" stroke-width="1.6" />
<line x1="478" y1="312.2" x2="485" y2="312.2" stroke="#cfcfcf" stroke-width="2" />
<text x="479" y="318.0" font-size="16.5" fill="#d2d2d2" text-anchor="end" >0</text>
<line x1="485" y1="381.45" x2="1145" y2="381.45" stroke="#9a9a9a" stroke-width="1.6" />
<line x1="478" y1="381.45" x2="485" y2="381.45" stroke="#cfcfcf" stroke-width="2" />
<text x="479" y="387.25" font-size="16.5" fill="#d2d2d2" text-anchor="end" >-20</text>
<line x1="485" y1="450.7" x2="1145" y2="450.7" stroke="#9a9a9a" stroke-width="1.6" />
<line x1="478" y1="450.7" x2="485" y2="450.7" stroke="#cfcfcf" stroke-width="2" />
<text x="479" y="456.5" font-size="16.5" fill="#d2d2d2" text-anchor="end" >-40</text>
<rect x="485" y="137.5" width="660" height="346.7" fill="none" stroke="#999" stroke-width="2"/>
<text x="800" y="133" font-size="14.5" fill="#d2d2d2" text-anchor="middle" textLength="96" lengthAdjust="spacingAndGlyphs" >RGB Balance</text>
<line x1="485" y1="484.2" x2="485" y2="491" stroke="#cfcfcf" stroke-width="2" />
<text x="485" y="508" font-size="16.5" fill="#d2d2d2" text-anchor="middle" >0</text>
<line x1="551" y1="484.2" x2="551" y2="491" stroke="#cfcfcf" stroke-width="2" />
<text x="551" y="508" font-size="16.5" fill="#d2d2d2" text-anchor="middle" >10</text>
<line x1="617" y1="484.2" x2="617" y2="491" stroke="#cfcfcf" stroke-width="2" />
<text x="617" y="508" font-size="16.5" fill="#d2d2d2" text-anchor="middle" >20</text>
<line x1="683" y1="484.2" x2="683" y2="491" stroke="#cfcfcf" stroke-width="2" />
<text x="683" y="508" font-size="16.5" fill="#d2d2d2" text-anchor="middle" >30</text>
<line x1="749" y1="484.2" x2="749" y2="491" stroke="#cfcfcf" stroke-width="2" />
<text x="749" y="508" font-size="16.5" fill="#d2d2d2" text-anchor="middle" >40</text>
<line x1="815" y1="484.2" x2="815" y2="491" stroke="#cfcfcf" stroke-width="2" />
<text x="815" y="508" font-size="16.5" fill="#d2d2d2" text-anchor="middle" >50</text>
<line x1="881" y1="484.2" x2="881" y2="491" stroke="#cfcfcf" stroke-width="2" />
<text x="881" y="508" font-size="16.5" fill="#d2d2d2" text-anchor="middle" >60</text>
<line x1="947" y1="484.2" x2="947" y2="491" stroke="#cfcfcf" stroke-width="2" />
<text x="947" y="508" font-size="16.5" fill="#d2d2d2" text-anchor="middle" >70</text>
<line x1="1013" y1="484.2" x2="1013" y2="491" stroke="#cfcfcf" stroke-width="2" />
<text x="1013" y="508" font-size="16.5" fill="#d2d2d2" text-anchor="middle" >80</text>
<line x1="1079" y1="484.2" x2="1079" y2="491" stroke="#cfcfcf" stroke-width="2" />
<text x="1079" y="508" font-size="16.5" fill="#d2d2d2" text-anchor="middle" >90</text>
<line x1="1145" y1="484.2" x2="1145" y2="491" stroke="#cfcfcf" stroke-width="2" />
<text x="1145" y="508" font-size="16.5" fill="#d2d2d2" text-anchor="middle" >100</text>
<polyline points="485,297.5 551,319.2 617,310 683,320.6 749,311.4 815,313.7 881,301.7 947,289.2 1013,293.8 1079,303 1145,311.4" fill="none" stroke="#ff0000" stroke-width="3.5" stroke-linejoin="round"/>
<polyline points="485,301.7 551,321.5 617,306.3 683,319.7 749,311.4 815,311 881,301.7 947,292.5 1013,295.2 1079,304 1145,310" fill="none" stroke="#008a00" stroke-width="3.5" stroke-linejoin="round"/>
<polyline points="485,293 551,308.6 617,301.7 683,316 749,311.4 815,308.6 881,301.7 947,295.7 1013,300.3 1079,307.7 1145,315.5" fill="none" stroke="#0000ff" stroke-width="3.5" stroke-linejoin="round"/>
<rect x="1220" y="137.8" width="660" height="346.4" fill="#232323" />
<line x1="1220" y1="480.0" x2="1880" y2="480.0" stroke="#9a9a9a" stroke-width="1.6" />
<line x1="1213" y1="480.0" x2="1220" y2="480.0" stroke="#cfcfcf" stroke-width="2" />
<text x="1212.8" y="485.8" font-size="16.5" fill="#d2d2d2" text-anchor="end" >1</text>
<line x1="1220" y1="436.86" x2="1880" y2="436.86" stroke="#9a9a9a" stroke-width="1.6" />
<line x1="1213" y1="436.86" x2="1220" y2="436.86" stroke="#cfcfcf" stroke-width="2" />
<text x="1212.8" y="442.66" font-size="16.5" fill="#d2d2d2" text-anchor="end" >1,2</text>
<line x1="1220" y1="393.72" x2="1880" y2="393.72" stroke="#9a9a9a" stroke-width="1.6" />
<line x1="1213" y1="393.72" x2="1220" y2="393.72" stroke="#cfcfcf" stroke-width="2" />
<text x="1212.8" y="399.52000000000004" font-size="16.5" fill="#d2d2d2" text-anchor="end" >1,4</text>
<line x1="1220" y1="350.58" x2="1880" y2="350.58" stroke="#9a9a9a" stroke-width="1.6" />
<line x1="1213" y1="350.58" x2="1220" y2="350.58" stroke="#cfcfcf" stroke-width="2" />
<text x="1212.8" y="356.38" font-size="16.5" fill="#d2d2d2" text-anchor="end" >1,6</text>
<line x1="1220" y1="307.44" x2="1880" y2="307.44" stroke="#9a9a9a" stroke-width="1.6" />
<line x1="1213" y1="307.44" x2="1220" y2="307.44" stroke="#cfcfcf" stroke-width="2" />
<text x="1212.8" y="313.24" font-size="16.5" fill="#d2d2d2" text-anchor="end" >1,8</text>
<line x1="1220" y1="264.3" x2="1880" y2="264.3" stroke="#9a9a9a" stroke-width="1.6" />
<line x1="1213" y1="264.3" x2="1220" y2="264.3" stroke="#cfcfcf" stroke-width="2" />
<text x="1212.8" y="270.1" font-size="16.5" fill="#d2d2d2" text-anchor="end" >2</text>
<line x1="1220" y1="221.15999999999997" x2="1880" y2="221.15999999999997" stroke="#9a9a9a" stroke-width="1.6" />
<line x1="1213" y1="221.15999999999997" x2="1220" y2="221.15999999999997" stroke="#cfcfcf" stroke-width="2" />
<text x="1212.8" y="226.95999999999998" font-size="16.5" fill="#d2d2d2" text-anchor="end" >2,2</text>
<line x1="1220" y1="178.02000000000004" x2="1880" y2="178.02000000000004" stroke="#9a9a9a" stroke-width="1.6" />
<line x1="1213" y1="178.02000000000004" x2="1220" y2="178.02000000000004" stroke="#cfcfcf" stroke-width="2" />
<text x="1212.8" y="183.82000000000005" font-size="16.5" fill="#d2d2d2" text-anchor="end" >2,4</text>
<rect x="1220" y="137.8" width="660" height="346.4" fill="none" stroke="#999" stroke-width="2"/>
<text x="1535" y="133" font-size="14.5" fill="#d2d2d2" text-anchor="middle" textLength="125" lengthAdjust="spacingAndGlyphs" >Gamma Log/Log</text>
<line x1="1220" y1="484.2" x2="1220" y2="491" stroke="#cfcfcf" stroke-width="2" />
<text x="1220" y="508" font-size="16.5" fill="#d2d2d2" text-anchor="middle" >0</text>
<line x1="1286" y1="484.2" x2="1286" y2="491" stroke="#cfcfcf" stroke-width="2" />
<text x="1286" y="508" font-size="16.5" fill="#d2d2d2" text-anchor="middle" >10</text>
<line x1="1352" y1="484.2" x2="1352" y2="491" stroke="#cfcfcf" stroke-width="2" />
<text x="1352" y="508" font-size="16.5" fill="#d2d2d2" text-anchor="middle" >20</text>
<line x1="1418" y1="484.2" x2="1418" y2="491" stroke="#cfcfcf" stroke-width="2" />
<text x="1418" y="508" font-size="16.5" fill="#d2d2d2" text-anchor="middle" >30</text>
<line x1="1484" y1="484.2" x2="1484" y2="491" stroke="#cfcfcf" stroke-width="2" />
<text x="1484" y="508" font-size="16.5" fill="#d2d2d2" text-anchor="middle" >40</text>
<line x1="1550" y1="484.2" x2="1550" y2="491" stroke="#cfcfcf" stroke-width="2" />
<text x="1550" y="508" font-size="16.5" fill="#d2d2d2" text-anchor="middle" >50</text>
<line x1="1616" y1="484.2" x2="1616" y2="491" stroke="#cfcfcf" stroke-width="2" />
<text x="1616" y="508" font-size="16.5" fill="#d2d2d2" text-anchor="middle" >60</text>
<line x1="1682" y1="484.2" x2="1682" y2="491" stroke="#cfcfcf" stroke-width="2" />
<text x="1682" y="508" font-size="16.5" fill="#d2d2d2" text-anchor="middle" >70</text>
<line x1="1748" y1="484.2" x2="1748" y2="491" stroke="#cfcfcf" stroke-width="2" />
<text x="1748" y="508" font-size="16.5" fill="#d2d2d2" text-anchor="middle" >80</text>
<line x1="1814" y1="484.2" x2="1814" y2="491" stroke="#cfcfcf" stroke-width="2" />
<text x="1814" y="508" font-size="16.5" fill="#d2d2d2" text-anchor="middle" >90</text>
<line x1="1880" y1="484.2" x2="1880" y2="491" stroke="#cfcfcf" stroke-width="2" />
<text x="1880" y="508" font-size="16.5" fill="#d2d2d2" text-anchor="middle" >100</text>
<polyline points="1219.7,417.4 1285,250.5 1350.8,239.6 1416.6,213.1 1483,215.8 1549,213.5 1615.5,222.3 1681.5,239.8 1747,248.2 1813,226.9 1878.6,202.5" fill="none" stroke="#8a8a8a" stroke-width="3" stroke-linejoin="round"/>
<path d="M1218.8,417.4 L1225,352.7 C1226.3,349.4 1230.2,339.8 1233.1,333.1 C1236.0,326.4 1239.4,318.5 1242.3,312.3 C1245.2,306.1 1246.6,302.0 1250.4,296.2 C1254.2,290.4 1260.6,282.9 1265.4,277.7 C1270.2,272.5 1274.3,268.8 1279.3,265 C1284.3,261.2 1290.0,258.0 1295.4,255.1 C1300.8,252.2 1305.0,250.3 1311.6,247.7 C1318.1,245.1 1327.0,242.0 1334.7,239.6 C1342.4,237.2 1349.2,235.1 1357.7,233.4 C1366.2,231.7 1375.6,230.7 1385.4,229.2 C1395.2,227.7 1400.3,226.6 1416.6,224.6 C1432.9,222.6 1460.9,219.2 1483,217.2 C1505.1,215.2 1526.9,213.9 1549,212.6 C1571.1,211.3 1593.4,210.3 1615.5,209.4 C1637.6,208.5 1659.6,207.8 1681.5,207.1 C1703.4,206.4 1725.1,205.8 1747,205.2 C1768.9,204.6 1790.8,203.9 1813,203.4 C1835.2,202.9 1868.8,202.2 1880,202" fill="none" stroke="#ffff00" stroke-width="3.3" stroke-linejoin="round"/>
<text x="113.5" y="553" font-size="33.3" fill="#f0f0f0" textLength="219" lengthAdjust="spacingAndGlyphs" stroke="#f0f0f0" stroke-width="0.45">Avg dE2000: 1</text>
<text x="572.5" y="553" font-size="33.3" fill="#f0f0f0" textLength="218" lengthAdjust="spacingAndGlyphs" stroke="#f0f0f0" stroke-width="0.45">Avg CCT: 6592</text>
<text x="1014" y="553" font-size="33.3" fill="#f0f0f0" textLength="297" lengthAdjust="spacingAndGlyphs" stroke="#f0f0f0" stroke-width="0.45">Contrast Ratio: 892</text>
<text x="1497.5" y="553" font-size="33.3" fill="#f0f0f0" textLength="293" lengthAdjust="spacingAndGlyphs" stroke="#f0f0f0" stroke-width="0.45">Total Gamma: 2,15</text>
<line x1="282.5" y1="575" x2="282.5" y2="717" stroke="#161616" stroke-width="1" />
<text transform="translate(297.8 605.8) rotate(-90)" font-size="14.5" fill="#f4f4f4" stroke="#f4f4f4" stroke-width="0.3" text-anchor="middle" textLength="37.5" lengthAdjust="spacingAndGlyphs">Actual</text>
<text transform="translate(297.8 668) rotate(-90)" font-size="14.5" fill="#f4f4f4" stroke="#f4f4f4" stroke-width="0.3" text-anchor="middle" textLength="37.5" lengthAdjust="spacingAndGlyphs">Target</text>
<rect x="308" y="583" width="112" height="54" fill="#070509" />
<rect x="308" y="637" width="112" height="55" fill="#010101" />
<rect x="307.5" y="581.5" width="113" height="111" fill="none" stroke="#f2f2f2" stroke-width="1"/>
<rect x="308.5" y="582.5" width="111" height="109" fill="none" stroke="rgba(0,0,0,0.3)" stroke-width="1"/>
<text x="364.0" y="708" font-size="12.5" fill="#f2f2f2" text-anchor="middle" stroke="#f2f2f2" stroke-width="0.35">0</text>
<rect x="440" y="583" width="112" height="54" fill="#1c1c1c" />
<rect x="440" y="637" width="112" height="55" fill="#1b1b1b" />
<rect x="439.5" y="581.5" width="113" height="111" fill="none" stroke="#f2f2f2" stroke-width="1"/>
<rect x="440.5" y="582.5" width="111" height="109" fill="none" stroke="rgba(0,0,0,0.3)" stroke-width="1"/>
<text x="496.3" y="708" font-size="12.5" fill="#f2f2f2" text-anchor="middle" stroke="#f2f2f2" stroke-width="0.35">10</text>
<rect x="573" y="583" width="112" height="54" fill="#333333" />
<rect x="573" y="637" width="112" height="55" fill="#323232" />
<rect x="572.5" y="581.5" width="113" height="111" fill="none" stroke="#f2f2f2" stroke-width="1"/>
<rect x="573.5" y="582.5" width="111" height="109" fill="none" stroke="rgba(0,0,0,0.3)" stroke-width="1"/>
<text x="628.6" y="708" font-size="12.5" fill="#f2f2f2" text-anchor="middle" stroke="#f2f2f2" stroke-width="0.35">20</text>
<rect x="705" y="583" width="112" height="54" fill="#4c4c4c" />
<rect x="705" y="637" width="112" height="55" fill="#4b4b4b" />
<rect x="704.5" y="581.5" width="113" height="111" fill="none" stroke="#f2f2f2" stroke-width="1"/>
<rect x="705.5" y="582.5" width="111" height="109" fill="none" stroke="rgba(0,0,0,0.3)" stroke-width="1"/>
<text x="760.9000000000001" y="708" font-size="12.5" fill="#f2f2f2" text-anchor="middle" stroke="#f2f2f2" stroke-width="0.35">30</text>
<rect x="837" y="583" width="112" height="54" fill="#686868" />
<rect x="837" y="637" width="112" height="55" fill="#676767" />
<rect x="836.5" y="581.5" width="113" height="111" fill="none" stroke="#f2f2f2" stroke-width="1"/>
<rect x="837.5" y="582.5" width="111" height="109" fill="none" stroke="rgba(0,0,0,0.3)" stroke-width="1"/>
<text x="893.2" y="708" font-size="12.5" fill="#f2f2f2" text-anchor="middle" stroke="#f2f2f2" stroke-width="0.35">40</text>
<rect x="969" y="583" width="112" height="54" fill="#808180" />
<rect x="969" y="637" width="112" height="55" fill="#7f807f" />
<rect x="968.5" y="581.5" width="113" height="111" fill="none" stroke="#f2f2f2" stroke-width="1"/>
<rect x="969.5" y="582.5" width="111" height="109" fill="none" stroke="rgba(0,0,0,0.3)" stroke-width="1"/>
<text x="1025.5" y="708" font-size="12.5" fill="#f2f2f2" text-anchor="middle" stroke="#f2f2f2" stroke-width="0.35">50</text>
<rect x="1102" y="583" width="112" height="54" fill="#9c9c9c" />
<rect x="1102" y="637" width="112" height="55" fill="#9b9b9b" />
<rect x="1101.5" y="581.5" width="113" height="111" fill="none" stroke="#f2f2f2" stroke-width="1"/>
<rect x="1102.5" y="582.5" width="111" height="109" fill="none" stroke="rgba(0,0,0,0.3)" stroke-width="1"/>
<text x="1157.8000000000002" y="708" font-size="12.5" fill="#f2f2f2" text-anchor="middle" stroke="#f2f2f2" stroke-width="0.35">60</text>
<rect x="1234" y="583" width="112" height="54" fill="#b7b7b7" />
<rect x="1234" y="637" width="112" height="55" fill="#b2b2b2" />
<rect x="1233.5" y="581.5" width="113" height="111" fill="none" stroke="#f2f2f2" stroke-width="1"/>
<rect x="1234.5" y="582.5" width="111" height="109" fill="none" stroke="rgba(0,0,0,0.3)" stroke-width="1"/>
<text x="1290.1000000000001" y="708" font-size="12.5" fill="#f2f2f2" text-anchor="middle" stroke="#f2f2f2" stroke-width="0.35">70</text>
<rect x="1366" y="583" width="112" height="54" fill="#d2d2d0" />
<rect x="1366" y="637" width="112" height="55" fill="#cbcbcb" />
<rect x="1365.5" y="581.5" width="113" height="111" fill="none" stroke="#f2f2f2" stroke-width="1"/>
<rect x="1366.5" y="582.5" width="111" height="109" fill="none" stroke="rgba(0,0,0,0.3)" stroke-width="1"/>
<text x="1422.4" y="708" font-size="12.5" fill="#f2f2f2" text-anchor="middle" stroke="#f2f2f2" stroke-width="0.35">80</text>
<rect x="1499" y="583" width="112" height="54" fill="#e6e6e6" />
<rect x="1499" y="637" width="112" height="55" fill="#e3e3e3" />
<rect x="1498.5" y="581.5" width="113" height="111" fill="none" stroke="#f2f2f2" stroke-width="1"/>
<rect x="1499.5" y="582.5" width="111" height="109" fill="none" stroke="rgba(0,0,0,0.3)" stroke-width="1"/>
<text x="1554.7" y="708" font-size="12.5" fill="#f2f2f2" text-anchor="middle" stroke="#f2f2f2" stroke-width="0.35">90</text>
<rect x="1631" y="583" width="112" height="54" fill="#fffffd" />
<rect x="1631" y="637" width="112" height="55" fill="#ffffff" />
<rect x="1630.5" y="581.5" width="113" height="111" fill="none" stroke="#f2f2f2" stroke-width="1"/>
<rect x="1631.5" y="582.5" width="111" height="109" fill="none" stroke="rgba(0,0,0,0.3)" stroke-width="1"/>
<text x="1687.0" y="708" font-size="12.5" fill="#f2f2f2" text-anchor="middle" stroke="#f2f2f2" stroke-width="0.35">100</text>
<text x="16.5" y="775.6" font-size="34" fill="#f0f0f0" textLength="252" lengthAdjust="spacingAndGlyphs" stroke="#f0f0f0" stroke-width="0.4">Current Reading</text>
<text x="16.5" y="822.8" font-size="30" fill="#f0f0f0" textLength="118" lengthAdjust="spacingAndGlyphs" >x: 0,3135</text>
<text x="16.5" y="866.2" font-size="30" fill="#f0f0f0" textLength="119" lengthAdjust="spacingAndGlyphs" >y: 0,3308</text>
<text x="16.5" y="911.3" font-size="30" fill="#f0f0f0" textLength="112" lengthAdjust="spacingAndGlyphs" >fL: 74,75</text>
<text x="16.5" y="955.4" font-size="30" fill="#f0f0f0" textLength="167" lengthAdjust="spacingAndGlyphs" >cd/m²: 256,1</text>
<rect x="376" y="741" width="338" height="232" fill="#1c1c1c" />
<rect x="384.5" y="748.5" width="321" height="222" fill="#333333" />
<rect x="427" y="751" width="276" height="4" fill="url(#cs0)" />
<rect x="427" y="755" width="276" height="4" fill="url(#cs1)" />
<rect x="427" y="759" width="276" height="4" fill="url(#cs2)" />
<rect x="427" y="763" width="276" height="4" fill="url(#cs3)" />
<rect x="427" y="767" width="276" height="4" fill="url(#cs4)" />
<rect x="427" y="771" width="276" height="4" fill="url(#cs5)" />
<rect x="427" y="775" width="276" height="4" fill="url(#cs6)" />
<rect x="427" y="779" width="276" height="4" fill="url(#cs7)" />
<rect x="427" y="783" width="276" height="4" fill="url(#cs8)" />
<rect x="427" y="787" width="276" height="4" fill="url(#cs9)" />
<rect x="427" y="791" width="276" height="4" fill="url(#cs10)" />
<rect x="427" y="795" width="276" height="4" fill="url(#cs11)" />
<rect x="427" y="799" width="276" height="4" fill="url(#cs12)" />
<rect x="427" y="803" width="276" height="4" fill="url(#cs13)" />
<rect x="427" y="807" width="276" height="4" fill="url(#cs14)" />
<rect x="427" y="811" width="276" height="4" fill="url(#cs15)" />
<rect x="427" y="815" width="276" height="4" fill="url(#cs16)" />
<rect x="427" y="819" width="276" height="4" fill="url(#cs17)" />
<rect x="427" y="823" width="276" height="4" fill="url(#cs18)" />
<rect x="427" y="827" width="276" height="4" fill="url(#cs19)" />
<rect x="427" y="831" width="276" height="4" fill="url(#cs20)" />
<rect x="427" y="835" width="276" height="4" fill="url(#cs21)" />
<rect x="427" y="839" width="276" height="4" fill="url(#cs22)" />
<rect x="427" y="843" width="276" height="4" fill="url(#cs23)" />
<rect x="427" y="847" width="276" height="4" fill="url(#cs24)" />
<rect x="427" y="851" width="276" height="4" fill="url(#cs25)" />
<rect x="427" y="855" width="276" height="4" fill="url(#cs26)" />
<rect x="427" y="859" width="276" height="4" fill="url(#cs27)" />
<rect x="427" y="863" width="276" height="4" fill="url(#cs28)" />
<rect x="427" y="867" width="276" height="4" fill="url(#cs29)" />
<rect x="427" y="871" width="276" height="4" fill="url(#cs30)" />
<rect x="427" y="875" width="276" height="4" fill="url(#cs31)" />
<rect x="427" y="879" width="276" height="4" fill="url(#cs32)" />
<rect x="427" y="883" width="276" height="4" fill="url(#cs33)" />
<rect x="427" y="887" width="276" height="4" fill="url(#cs34)" />
<rect x="427" y="891" width="276" height="4" fill="url(#cs35)" />
<rect x="427" y="895" width="276" height="4" fill="url(#cs36)" />
<rect x="427" y="899" width="276" height="4" fill="url(#cs37)" />
<rect x="427" y="903" width="276" height="4" fill="url(#cs38)" />
<rect x="427" y="907" width="276" height="4" fill="url(#cs39)" />
<rect x="427" y="911" width="276" height="4" fill="url(#cs40)" />
<rect x="427" y="915" width="276" height="4" fill="url(#cs41)" />
<rect x="427" y="919" width="276" height="4" fill="url(#cs42)" />
<rect x="427" y="923" width="276" height="4" fill="url(#cs43)" />
<rect x="427" y="927" width="276" height="4" fill="url(#cs44)" />
<rect x="427" y="931" width="276" height="4" fill="url(#cs45)" />
<rect x="427" y="935" width="276" height="4" fill="url(#cs46)" />
<rect x="427.5" y="751.5" width="274.5" height="187.5" fill="none" stroke="#a8a8a8" stroke-width="2"/>
<line x1="421" y1="766.3" x2="427.5" y2="766.3" stroke="#d0d0d0" stroke-width="2" />
<text x="421" y="772.5" font-size="15.6" fill="#d2d2d2" text-anchor="end" textLength="32.5" lengthAdjust="spacingAndGlyphs" >0,35</text>
<line x1="421" y1="803.7999999999997" x2="427.5" y2="803.7999999999997" stroke="#d0d0d0" stroke-width="2" />
<text x="421" y="809.9999999999998" font-size="15.6" fill="#d2d2d2" text-anchor="end" textLength="32.5" lengthAdjust="spacingAndGlyphs" >0,34</text>
<line x1="421" y1="841.2999999999998" x2="427.5" y2="841.2999999999998" stroke="#d0d0d0" stroke-width="2" />
<text x="421" y="847.4999999999999" font-size="15.6" fill="#d2d2d2" text-anchor="end" textLength="32.5" lengthAdjust="spacingAndGlyphs" >0,33</text>
<line x1="421" y1="878.7999999999998" x2="427.5" y2="878.7999999999998" stroke="#d0d0d0" stroke-width="2" />
<text x="421" y="884.9999999999999" font-size="15.6" fill="#d2d2d2" text-anchor="end" textLength="32.5" lengthAdjust="spacingAndGlyphs" >0,32</text>
<line x1="421" y1="916.3" x2="427.5" y2="916.3" stroke="#d0d0d0" stroke-width="2" />
<text x="421" y="922.5" font-size="15.6" fill="#d2d2d2" text-anchor="end" textLength="32.5" lengthAdjust="spacingAndGlyphs" >0,31</text>
<line x1="438.8" y1="939" x2="438.8" y2="945" stroke="#d0d0d0" stroke-width="2" />
<text x="438.8" y="962" font-size="15.6" fill="#d2d2d2" text-anchor="middle" textLength="32.5" lengthAdjust="spacingAndGlyphs" >0,29</text>
<line x1="493.55000000000007" y1="939" x2="493.55000000000007" y2="945" stroke="#d0d0d0" stroke-width="2" />
<text x="493.55000000000007" y="962" font-size="15.6" fill="#d2d2d2" text-anchor="middle" textLength="23.5" lengthAdjust="spacingAndGlyphs" >0,3</text>
<line x1="548.3000000000001" y1="939" x2="548.3000000000001" y2="945" stroke="#d0d0d0" stroke-width="2" />
<text x="548.3000000000001" y="962" font-size="15.6" fill="#d2d2d2" text-anchor="middle" textLength="32.5" lengthAdjust="spacingAndGlyphs" >0,31</text>
<line x1="603.0500000000002" y1="939" x2="603.0500000000002" y2="945" stroke="#d0d0d0" stroke-width="2" />
<text x="603.0500000000002" y="962" font-size="15.6" fill="#d2d2d2" text-anchor="middle" textLength="32.5" lengthAdjust="spacingAndGlyphs" >0,32</text>
<line x1="657.8000000000002" y1="939" x2="657.8000000000002" y2="945" stroke="#d0d0d0" stroke-width="2" />
<text x="657.8000000000002" y="962" font-size="15.6" fill="#d2d2d2" text-anchor="middle" textLength="32.5" lengthAdjust="spacingAndGlyphs" >0,33</text>
<clipPath id="pclip"><rect x="427.5" y="751.5" width="274.5" height="187.5"/></clipPath>
<path d="M460 940.5 Q580 856 702 781" fill="none" stroke="#000" stroke-width="3.2" clip-path="url(#pclip)"/>
<circle cx="517.2" cy="902.8" r="5.2" fill="#1e1e1e" stroke="#000" stroke-width="0.8"/>
<circle cx="540.3" cy="859.8" r="5.2" fill="#2a2a2a" stroke="#000" stroke-width="0.8"/>
<circle cx="554.5" cy="852" r="5.2" fill="#3c3c3c" stroke="#000" stroke-width="0.8"/>
<circle cx="556" cy="848" r="5.2" fill="#6a6a6a" stroke="#000" stroke-width="0.8"/>
<rect x="556.5" y="837.5" width="15" height="15.5" fill="none" stroke="#000" stroke-width="1.6"/>
<circle cx="563" cy="845" r="5.2" fill="#8a8a8a" stroke="#000" stroke-width="0.8"/>
<circle cx="573" cy="842.5" r="5.2" fill="#d0d0d0" stroke="#000" stroke-width="0.8"/>
<circle cx="567" cy="845" r="5.2" fill="#c0c0c0" stroke="#000" stroke-width="0.8"/>
<circle cx="569" cy="840" r="5.2" fill="#e8e8e8" stroke="#000" stroke-width="0.8"/>
<circle cx="569" cy="837" r="5.2" fill="#ffffff" stroke="#000" stroke-width="0.8"/>
<rect x="723" y="728" width="15" height="30" fill="#000000" />
<rect x="738" y="728" width="994" height="15" fill="#2e2e2e" />
<rect x="738" y="743" width="994" height="15" fill="#141414" />
<text x="893" y="748.8" font-size="16.3" fill="#f5f5f5" stroke="#f5f5f5" stroke-width="0.45">0</text>
<text x="979" y="748.8" font-size="16.3" fill="#f5f5f5" stroke="#f5f5f5" stroke-width="0.45">10</text>
<text x="1055" y="748.8" font-size="16.3" fill="#f5f5f5" stroke="#f5f5f5" stroke-width="0.45">20</text>
<text x="1131" y="748.8" font-size="16.3" fill="#f5f5f5" stroke="#f5f5f5" stroke-width="0.45">30</text>
<text x="1206.5" y="748.8" font-size="16.3" fill="#f5f5f5" stroke="#f5f5f5" stroke-width="0.45">40</text>
<text x="1282" y="748.8" font-size="16.3" fill="#f5f5f5" stroke="#f5f5f5" stroke-width="0.45">50</text>
<text x="1357.7" y="748.8" font-size="16.3" fill="#f5f5f5" stroke="#f5f5f5" stroke-width="0.45">60</text>
<text x="1433.7" y="748.8" font-size="16.3" fill="#f5f5f5" stroke="#f5f5f5" stroke-width="0.45">70</text>
<text x="1509.8" y="748.8" font-size="16.3" fill="#f5f5f5" stroke="#f5f5f5" stroke-width="0.45">80</text>
<text x="1585.8" y="748.8" font-size="16.3" fill="#f5f5f5" stroke="#f5f5f5" stroke-width="0.45">90</text>
<text x="1661.2" y="748.8" font-size="16.3" fill="#f5f5f5" stroke="#f5f5f5" stroke-width="0.45">100</text>
<rect x="723" y="758" width="15" height="28" fill="#222222" />
<rect x="738" y="758" width="994" height="28" fill="#424242" />
<text x="743" y="778.5" font-size="18" fill="#f2f2f2" textLength="63.3" lengthAdjust="spacingAndGlyphs" >x: CIE31</text>
<text x="893" y="778.5" font-size="18" fill="#f2f2f2" >0,29</text>
<text x="979" y="778.5" font-size="18" fill="#f2f2f2" >0,30</text>
<text x="1055" y="778.5" font-size="18" fill="#f2f2f2" >0,31</text>
<text x="1131" y="778.5" font-size="18" fill="#f2f2f2" >0,31</text>
<text x="1206.5" y="778.5" font-size="18" fill="#f2f2f2" >0,31</text>
<text x="1282" y="778.5" font-size="18" fill="#f2f2f2" >0,31</text>
<text x="1357.7" y="778.5" font-size="18" fill="#f2f2f2" >0,31</text>
<text x="1433.7" y="778.5" font-size="18" fill="#f2f2f2" >0,31</text>
<text x="1509.8" y="778.5" font-size="18" fill="#f2f2f2" >0,31</text>
<text x="1585.8" y="778.5" font-size="18" fill="#f2f2f2" >0,31</text>
<text x="1661.2" y="778.5" font-size="18" fill="#f2f2f2" >0,31</text>
<rect x="723" y="786" width="15" height="28" fill="#222222" />
<rect x="738" y="786" width="994" height="28" fill="#7f7f7f" />
<text x="743" y="806.5" font-size="18" fill="#e4e4e4" textLength="63.3" lengthAdjust="spacingAndGlyphs" >y: CIE31</text>
<text x="893" y="806.5" font-size="18" fill="#e4e4e4" >0,25</text>
<text x="979" y="806.5" font-size="18" fill="#e4e4e4" >0,31</text>
<text x="1055" y="806.5" font-size="18" fill="#e4e4e4" >0,32</text>
<text x="1131" y="806.5" font-size="18" fill="#e4e4e4" >0,33</text>
<text x="1206.5" y="806.5" font-size="18" fill="#e4e4e4" >0,33</text>
<text x="1282" y="806.5" font-size="18" fill="#e4e4e4" >0,33</text>
<text x="1357.7" y="806.5" font-size="18" fill="#e4e4e4" >0,33</text>
<text x="1433.7" y="806.5" font-size="18" fill="#e4e4e4" >0,33</text>
<text x="1509.8" y="806.5" font-size="18" fill="#e4e4e4" >0,33</text>
<text x="1585.8" y="806.5" font-size="18" fill="#e4e4e4" >0,33</text>
<text x="1661.2" y="806.5" font-size="18" fill="#e4e4e4" >0,33</text>
<rect x="723" y="814" width="15" height="28" fill="#222222" />
<rect x="738" y="814" width="994" height="28" fill="#424242" />
<text x="743" y="834.5" font-size="18" fill="#f2f2f2" textLength="10.8" lengthAdjust="spacingAndGlyphs" >Y</text>
<text x="893" y="834.5" font-size="18" fill="#f2f2f2" >0,29</text>
<text x="979" y="834.5" font-size="18" fill="#f2f2f2" >2,36</text>
<text x="1055" y="834.5" font-size="18" fill="#f2f2f2" >8,72</text>
<text x="1131" y="834.5" font-size="18" fill="#f2f2f2" >17,43</text>
<text x="1206.5" y="834.5" font-size="18" fill="#f2f2f2" >33,74</text>
<text x="1282" y="834.5" font-size="18" fill="#f2f2f2" >55,15</text>
<text x="1357.7" y="834.5" font-size="18" fill="#f2f2f2" >84,02</text>
<text x="1433.7" y="834.5" font-size="18" fill="#f2f2f2" >120,48</text>
<text x="1509.8" y="834.5" font-size="18" fill="#f2f2f2" >161,63</text>
<text x="1585.8" y="834.5" font-size="18" fill="#f2f2f2" >204,91</text>
<text x="1661.2" y="834.5" font-size="18" fill="#f2f2f2" >256,10</text>
<rect x="723" y="842" width="15" height="28" fill="#222222" />
<rect x="738" y="842" width="994" height="28" fill="#7f7f7f" />
<text x="743" y="862.5" font-size="18" fill="#e4e4e4" textLength="66.4" lengthAdjust="spacingAndGlyphs" >Target Y</text>
<text x="893" y="862.5" font-size="18" fill="#e4e4e4" >0,00</text>
<text x="979" y="862.5" font-size="18" fill="#e4e4e4" >2,65</text>
<text x="1055" y="862.5" font-size="18" fill="#e4e4e4" >8,48</text>
<text x="1131" y="862.5" font-size="18" fill="#e4e4e4" >18,51</text>
<text x="1206.5" y="862.5" font-size="18" fill="#e4e4e4" >34,03</text>
<text x="1282" y="862.5" font-size="18" fill="#e4e4e4" >55,28</text>
<text x="1357.7" y="862.5" font-size="18" fill="#e4e4e4" >81,58</text>
<text x="1433.7" y="862.5" font-size="18" fill="#e4e4e4" >114,02</text>
<text x="1509.8" y="862.5" font-size="18" fill="#e4e4e4" >154,64</text>
<text x="1585.8" y="862.5" font-size="18" fill="#e4e4e4" >202,66</text>
<text x="1661.2" y="862.5" font-size="18" fill="#e4e4e4" >256,10</text>
<rect x="723" y="870" width="15" height="28" fill="#222222" />
<rect x="738" y="870" width="994" height="28" fill="#424242" />
<text x="743" y="890.5" font-size="18" fill="#f2f2f2" textLength="138.3" lengthAdjust="spacingAndGlyphs" >Gamma Log/Log</text>
<text x="893" y="890.5" font-size="18" fill="#f2f2f2" >1,28</text>
<text x="979" y="890.5" font-size="18" fill="#f2f2f2" >2,05</text>
<text x="1055" y="890.5" font-size="18" fill="#f2f2f2" >2,10</text>
<text x="1131" y="890.5" font-size="18" fill="#f2f2f2" >2,22</text>
<text x="1206.5" y="890.5" font-size="18" fill="#f2f2f2" >2,21</text>
<text x="1282" y="890.5" font-size="18" fill="#f2f2f2" >2,23</text>
<text x="1357.7" y="890.5" font-size="18" fill="#f2f2f2" >2,18</text>
<text x="1433.7" y="890.5" font-size="18" fill="#f2f2f2" >2,10</text>
<text x="1509.8" y="890.5" font-size="18" fill="#f2f2f2" >2,06</text>
<text x="1585.8" y="890.5" font-size="18" fill="#f2f2f2" >2,16</text>
<text x="1661.2" y="890.5" font-size="18" fill="#f2f2f2" >2,27</text>
<rect x="723" y="898" width="15" height="28" fill="#222222" />
<rect x="738" y="898" width="994" height="28" fill="#7f7f7f" />
<text x="743" y="918.5" font-size="18" fill="#e4e4e4" textLength="31.8" lengthAdjust="spacingAndGlyphs" >CCT</text>
<text x="893" y="918.5" font-size="18" fill="#e4e4e4" >11229,00</text>
<text x="979" y="918.5" font-size="18" fill="#e4e4e4" >7178,00</text>
<text x="1055" y="918.5" font-size="18" fill="#e4e4e4" >6782,00</text>
<text x="1131" y="918.5" font-size="18" fill="#e4e4e4" >6614,00</text>
<text x="1206.5" y="918.5" font-size="18" fill="#e4e4e4" >6512,00</text>
<text x="1282" y="918.5" font-size="18" fill="#e4e4e4" >6588,00</text>
<text x="1357.7" y="918.5" font-size="18" fill="#e4e4e4" >6500,00</text>
<text x="1433.7" y="918.5" font-size="18" fill="#e4e4e4" >6423,00</text>
<text x="1509.8" y="918.5" font-size="18" fill="#e4e4e4" >6420,00</text>
<text x="1585.8" y="918.5" font-size="18" fill="#e4e4e4" >6459,00</text>
<text x="1661.2" y="918.5" font-size="18" fill="#e4e4e4" >6448,00</text>
<rect x="723" y="926" width="15" height="28" fill="#222222" />
<rect x="738" y="926" width="994" height="28" fill="#424242" />
<text x="743" y="946.5" font-size="18" fill="#f2f2f2" textLength="67.3" lengthAdjust="spacingAndGlyphs" >ΔE 2000</text>
<text x="893" y="946.5" font-size="18" fill="#f2f2f2" >1,75</text>
<text x="979" y="946.5" font-size="18" fill="#f2f2f2" >1,99</text>
<text x="1055" y="946.5" font-size="18" fill="#f2f2f2" >0,81</text>
<text x="1131" y="946.5" font-size="18" fill="#f2f2f2" >0,91</text>
<text x="1206.5" y="946.5" font-size="18" fill="#f2f2f2" >0,25</text>
<text x="1282" y="946.5" font-size="18" fill="#f2f2f2" >0,48</text>
<text x="1357.7" y="946.5" font-size="18" fill="#f2f2f2" >0,66</text>
<text x="1433.7" y="946.5" font-size="18" fill="#f2f2f2" >1,36</text>
<text x="1509.8" y="946.5" font-size="18" fill="#f2f2f2" >1,33</text>
<text x="1585.8" y="946.5" font-size="18" fill="#f2f2f2" >0,70</text>
<text x="1661.2" y="946.5" font-size="18" fill="#f2f2f2" >1,09</text>
<rect x="1.3" y="978.5" width="143" height="60.5" rx="3.5" fill="url(#pbg)"/>
<rect x="6.8" y="983.2" width="132.5" height="35.6" rx="3.5" fill="#000000" stroke="rgba(0,0,0,0.35)" stroke-width="1"/>
<text x="72.8" y="1033.8" font-size="12" fill="#262626" text-anchor="middle" stroke="#262626" stroke-width="0.3">0</text>
<rect x="146.3" y="978.5" width="143" height="60.5" rx="3.5" fill="url(#pbg)"/>
<rect x="151.8" y="983.2" width="132.5" height="35.6" rx="3.5" fill="#1b1b1b" stroke="rgba(0,0,0,0.35)" stroke-width="1"/>
<text x="217.8" y="1033.8" font-size="12" fill="#262626" text-anchor="middle" stroke="#262626" stroke-width="0.3">10</text>
<rect x="291.3" y="978.5" width="143" height="60.5" rx="3.5" fill="url(#pbg)"/>
<rect x="296.8" y="983.2" width="132.5" height="35.6" rx="3.5" fill="#333333" stroke="rgba(0,0,0,0.35)" stroke-width="1"/>
<text x="362.8" y="1033.8" font-size="12" fill="#262626" text-anchor="middle" stroke="#262626" stroke-width="0.3">20</text>
<rect x="436.3" y="978.5" width="143" height="60.5" rx="3.5" fill="url(#pbg)"/>
<rect x="441.8" y="983.2" width="132.5" height="35.6" rx="3.5" fill="#4b4b4b" stroke="rgba(0,0,0,0.35)" stroke-width="1"/>
<text x="507.8" y="1033.8" font-size="12" fill="#262626" text-anchor="middle" stroke="#262626" stroke-width="0.3">30</text>
<rect x="581.3" y="978.5" width="143" height="60.5" rx="3.5" fill="url(#pbg)"/>
<rect x="586.8" y="983.2" width="132.5" height="35.6" rx="3.5" fill="#676767" stroke="rgba(0,0,0,0.35)" stroke-width="1"/>
<text x="652.8" y="1033.8" font-size="12" fill="#262626" text-anchor="middle" stroke="#262626" stroke-width="0.3">40</text>
<rect x="726.3" y="978.5" width="143" height="60.5" rx="3.5" fill="url(#pbg)"/>
<rect x="731.8" y="983.2" width="132.5" height="35.6" rx="3.5" fill="#818181" stroke="rgba(0,0,0,0.35)" stroke-width="1"/>
<text x="797.8" y="1033.8" font-size="12" fill="#262626" text-anchor="middle" stroke="#262626" stroke-width="0.3">50</text>
<rect x="871.3" y="978.5" width="143" height="60.5" rx="3.5" fill="url(#pbg)"/>
<rect x="876.8" y="983.2" width="132.5" height="35.6" rx="3.5" fill="#9c9c9c" stroke="rgba(0,0,0,0.35)" stroke-width="1"/>
<text x="942.8" y="1033.8" font-size="12" fill="#262626" text-anchor="middle" stroke="#262626" stroke-width="0.3">60</text>
<rect x="1016.3" y="978.5" width="143" height="60.5" rx="3.5" fill="url(#pbg)"/>
<rect x="1021.8" y="983.2" width="132.5" height="35.6" rx="3.5" fill="#b4b4b4" stroke="rgba(0,0,0,0.35)" stroke-width="1"/>
<text x="1087.8" y="1033.8" font-size="12" fill="#262626" text-anchor="middle" stroke="#262626" stroke-width="0.3">70</text>
<rect x="1161.3" y="978.5" width="143" height="60.5" rx="3.5" fill="url(#pbg)"/>
<rect x="1166.8" y="983.2" width="132.5" height="35.6" rx="3.5" fill="#cfcfcf" stroke="rgba(0,0,0,0.35)" stroke-width="1"/>
<text x="1232.8" y="1033.8" font-size="12" fill="#262626" text-anchor="middle" stroke="#262626" stroke-width="0.3">80</text>
<rect x="1306.3" y="978.5" width="143" height="60.5" rx="3.5" fill="url(#pbg)"/>
<rect x="1311.8" y="983.2" width="132.5" height="35.6" rx="3.5" fill="#e5e5e5" stroke="rgba(0,0,0,0.35)" stroke-width="1"/>
<text x="1377.8" y="1033.8" font-size="12" fill="#262626" text-anchor="middle" stroke="#262626" stroke-width="0.3">90</text>
<rect x="1451.3" y="978.5" width="143" height="60.5" rx="3.5" fill="url(#selg)"/>
<rect x="1456.3" y="982.8" width="133.5" height="36" rx="3.5" fill="#ffffff"/>
<text x="1522.8" y="1034.5" font-size="12.5" fill="#ffffff" text-anchor="middle" font-weight="bold" >100</text>
<rect x="1597" y="978.5" width="48" height="17" rx="3" fill="url(#cbg)"/>
<circle cx="1621" cy="987" r="7" fill="url(#cdd)"/>
<path d="M1617 989 H1625 L1621 984.5 Z" fill="#333"/>
<rect x="1597" y="996.5" width="48" height="44" rx="3" fill="url(#cbg)"/>
<rect x="1606.5" y="1003" width="29" height="29" rx="4" fill="none" stroke="#3a3a3a" stroke-width="2.5"/>
<rect x="1614" y="1010.5" width="14" height="14" fill="#000" />
<rect x="1646" y="978.5" width="45.3" height="29" fill="url(#cbg)" stroke="#5a5a5a" stroke-width="0.8"/>
<circle cx="1668.6" cy="992.5" r="10" fill="url(#cdd)"/>
<rect x="1692.3" y="978.5" width="45.3" height="29" fill="url(#cbg)" stroke="#5a5a5a" stroke-width="0.8"/>
<circle cx="1714.8999999999999" cy="992.5" r="10" fill="url(#cdd)"/>
<rect x="1737.5" y="978.5" width="45.3" height="29" fill="url(#cbg)" stroke="#5a5a5a" stroke-width="0.8"/>
<circle cx="1760.1" cy="992.5" r="10" fill="url(#cdd)"/>
<rect x="1782.5" y="978.5" width="45.3" height="29" fill="url(#cbg)" stroke="#5a5a5a" stroke-width="0.8"/>
<circle cx="1805.1" cy="992.5" r="10" fill="url(#cdd)"/>
<rect x="1827.7" y="978.5" width="44.3" height="29" fill="url(#cbg)" stroke="#5a5a5a" stroke-width="0.8"/>
<circle cx="1850.3" cy="992.5" r="10" fill="url(#cdd)"/>
<rect x="1872.5" y="978" width="40" height="29" fill="url(#dkg)" />
<circle cx="1896" cy="993" r="10" fill="#232323"/>
<rect x="1664" y="988" width="8" height="8" fill="#2a2a2a" />
<path d="M1711 987.5 L1719 992.5 L1711 997.5 Z" fill="#2a2a2a"/>
<path d="M1756.5 988.5 H1754.5 V998.5 H1756.5 M1763.5 988.5 H1765.5 V998.5 H1763.5" fill="none" stroke="#2a2a2a" stroke-width="2"/>
<rect x="1758.3" y="992.6" width="1.6" height="1.8" fill="#2a2a2a" />
<rect x="1760.6" y="992.6" width="1.6" height="1.8" fill="#2a2a2a" />
<path d="M1805 993 C1802.5 989.8 1798.5 990 1798.5 993 C1798.5 996 1802.5 996.2 1805 993 C1807.5 989.8 1811.5 990 1811.5 993 C1811.5 996 1807.5 996.2 1805 993 Z" fill="none" stroke="#2a2a2a" stroke-width="1.8"/>
<path d="M1845.3 992.5 A4.8 4.8 0 0 1 1853.5 989.5 M1854.7 994 A4.8 4.8 0 0 1 1846.5 997" fill="none" stroke="#2a2a2a" stroke-width="2"/>
<path d="M1851 990.5 L1855.5 991.5 L1855.5 986.5 Z M1849 996 L1844.5 995 L1844.5 1000 Z" fill="#2a2a2a"/>
<rect x="1646" y="1009.5" width="136.5" height="31" fill="url(#cbg)" stroke="#5a5a5a" stroke-width="0.8"/>
<rect x="1783" y="1009.5" width="130" height="31" fill="url(#cbg)" stroke="#5a5a5a" stroke-width="0.8"/>
<circle cx="1677" cy="1023.8" r="10" fill="url(#cdd)"/>
<circle cx="1890" cy="1023.8" r="10" fill="url(#cdd)"/>
<path d="M1676.5 1019 L1672 1024 L1676.5 1029 M1681 1019 L1676.5 1024 L1681 1029" fill="none" stroke="#2a2a2a" stroke-width="1.5"/>
<path d="M1886.5 1019.5 L1891 1024.5 L1886.5 1029.5 M1891 1019.5 L1895.5 1024.5 L1891 1029.5" fill="none" stroke="#2a2a2a" stroke-width="1.5"/>
<text x="1703" y="1031.7" font-size="22" fill="#303030" textLength="51.5" lengthAdjust="spacingAndGlyphs" stroke="#303030" stroke-width="0.7">Back</text>
<text x="1811" y="1032" font-size="22" fill="#303030" textLength="51" lengthAdjust="spacingAndGlyphs" stroke="#303030" stroke-width="0.7">Next</text>
</svg>
</body></html>
